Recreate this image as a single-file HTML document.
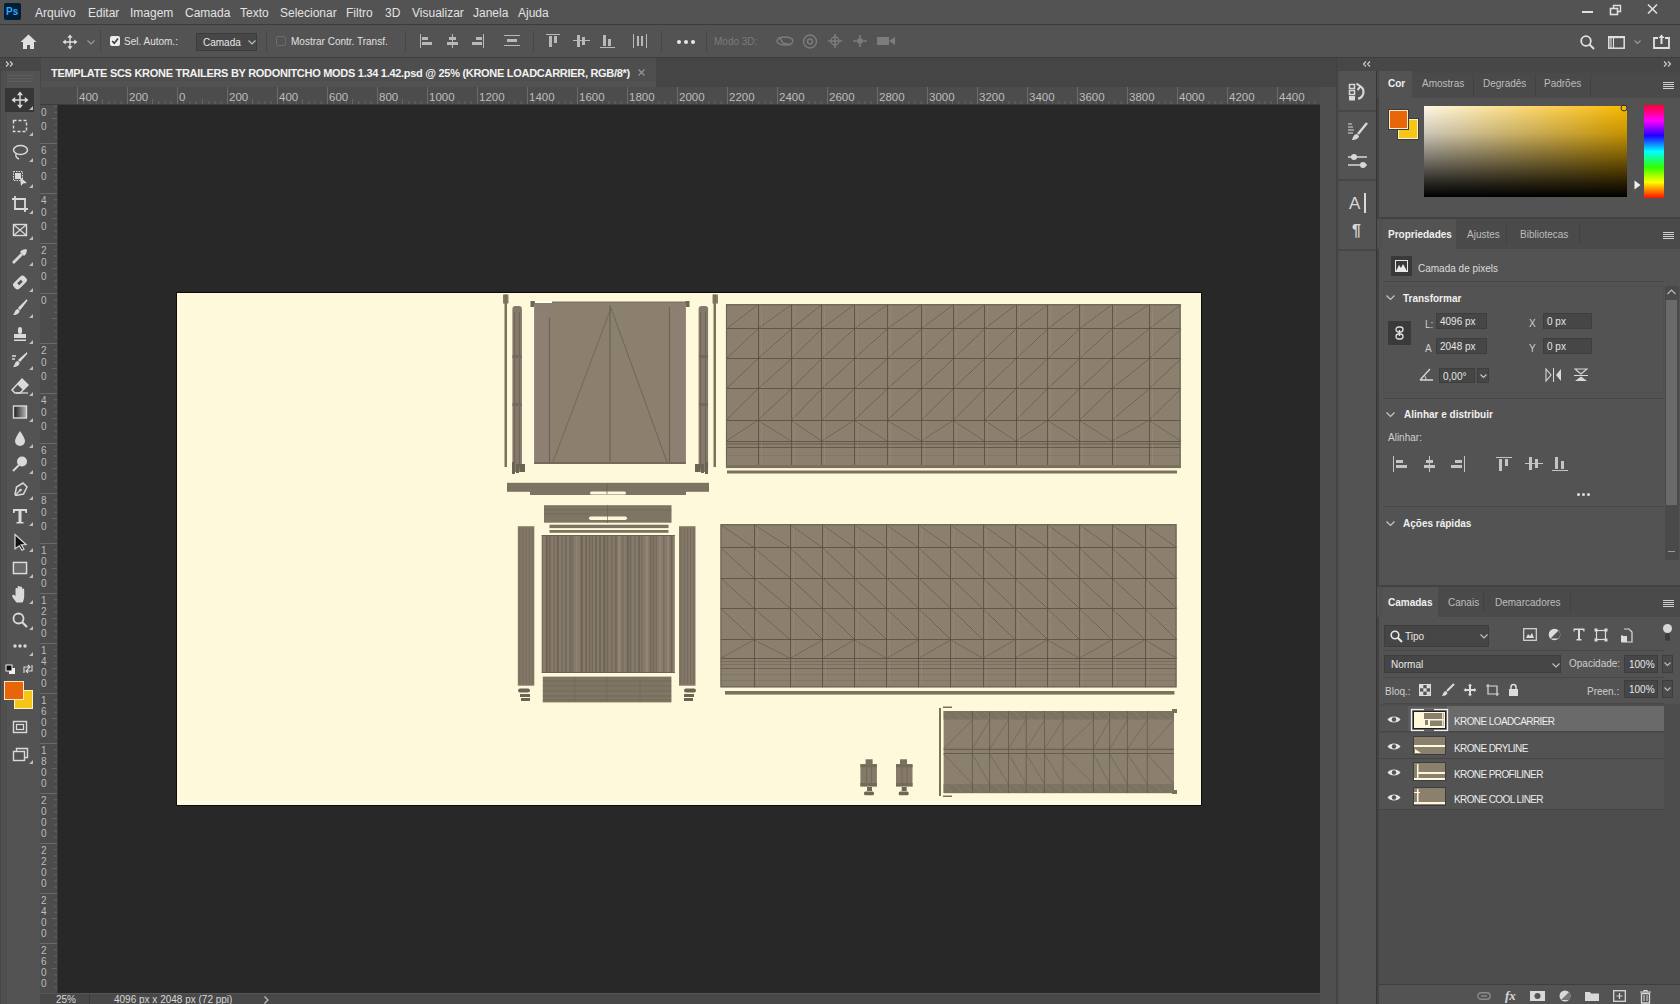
<!DOCTYPE html>
<html><head><meta charset="utf-8"><style>
*{margin:0;padding:0;box-sizing:border-box}
html,body{width:1680px;height:1004px;overflow:hidden;background:#535353;font-family:"Liberation Sans",sans-serif;color:#e8e8e8;position:relative}
.a{position:absolute}
.t{position:absolute;white-space:nowrap;line-height:1}
.mi{font-size:12px;top:7px;color:#e4e4e4}
svg{position:absolute;overflow:visible}
</style></head><body>
<div class="a" style="left:0px;top:0px;width:1680px;height:24px;background:#535353;"></div>
<div class="a" style="left:0px;top:24px;width:1680px;height:1px;background:#3b3b3b;"></div>
<div class="a" style="left:0px;top:25px;width:1680px;height:32px;background:#535353;"></div>
<div class="a" style="left:0px;top:57px;width:1680px;height:1px;background:#3d3d3d;"></div>
<div class="a" style="left:0px;top:58px;width:40px;height:946px;background:#535353;"></div>
<div class="a" style="left:0px;top:58px;width:40px;height:13px;background:#474747;"></div>
<div class="a" style="left:40px;top:58px;width:1296px;height:29px;background:#454545;"></div>
<div class="a" style="left:40px;top:58px;width:616px;height:29px;background:#4e4e4e;"></div>
<div class="a" style="left:40px;top:81px;width:616px;height:6px;background:#525252;"></div>
<div class="a" style="left:40px;top:58px;width:1px;height:29px;background:#474747;"></div>
<div class="a" style="left:40px;top:87px;width:1280px;height:18px;background:#4c4c4c;"></div>
<div class="a" style="left:40px;top:105px;width:18px;height:888px;background:#4c4c4c;"></div>
<div class="a" style="left:58px;top:105px;width:1262px;height:888px;background:#282828;"></div>
<div class="a" style="left:40px;top:993px;width:1280px;height:11px;background:#484848;"></div>
<div class="a" style="left:1320px;top:87px;width:16px;height:917px;background:#4f4f4f;"></div>
<div class="a" style="left:1336px;top:58px;width:344px;height:946px;background:#474747;"></div>
<div class="a" style="left:1337px;top:71px;width:39px;height:933px;background:#535353;"></div>
<div class="a" style="left:1378px;top:71px;width:302px;height:933px;background:#535353;"></div>
<div class="a" style="left:4px;top:3px;width:17px;height:17px;background:#001e36;border-radius:2px"></div>
<div class="t" style="left:6px;top:7px;font-size:10px;color:#31a8ff;font-weight:bold;">Ps</div>
<div class="t" style="left:35px;top:7px;font-size:12px;color:#e2e2e2;">Arquivo</div>
<div class="t" style="left:88px;top:7px;font-size:12px;color:#e2e2e2;">Editar</div>
<div class="t" style="left:130px;top:7px;font-size:12px;color:#e2e2e2;">Imagem</div>
<div class="t" style="left:185px;top:7px;font-size:12px;color:#e2e2e2;">Camada</div>
<div class="t" style="left:240px;top:7px;font-size:12px;color:#e2e2e2;">Texto</div>
<div class="t" style="left:280px;top:7px;font-size:12px;color:#e2e2e2;">Selecionar</div>
<div class="t" style="left:346px;top:7px;font-size:12px;color:#e2e2e2;">Filtro</div>
<div class="t" style="left:385px;top:7px;font-size:12px;color:#e2e2e2;">3D</div>
<div class="t" style="left:412px;top:7px;font-size:12px;color:#e2e2e2;">Visualizar</div>
<div class="t" style="left:473px;top:7px;font-size:12px;color:#e2e2e2;">Janela</div>
<div class="t" style="left:518px;top:7px;font-size:12px;color:#e2e2e2;">Ajuda</div>
<div class="a" style="left:1582px;top:11px;width:11px;height:2px;background:#e0e0e0;"></div>
<svg style="left:1609px;top:4px;" width="14" height="12" viewBox="0 0 14 12"><rect x="1.5" y="4.5" width="7" height="6" fill="none" stroke="#e0e0e0" stroke-width="1.6"/><path d="M4.5 4.5V1.5H11.5V7.5H8.5" fill="none" stroke="#e0e0e0" stroke-width="1.4"/></svg>
<svg style="left:1647px;top:4px;" width="12" height="10" viewBox="0 0 12 10"><path d="M1 0.5L10 9.5M10 0.5L1 9.5" stroke="#e0e0e0" stroke-width="1.6"/></svg>
<svg style="left:20px;top:34px;" width="17" height="16" viewBox="0 0 17 16"><path d="M8.5 0.5L0.5 8H3V15H7V11H10V15H14V8H16.5Z" fill="#e0e0e0"/></svg>
<svg style="left:62px;top:34px;" width="16" height="16" viewBox="0 0 16 16"><path d="M8 2.5V13.5M2.5 8H13.5" stroke="#e0e0e0" stroke-width="1.3"/><path d="M8 0.5L10.6 3.8H5.4Z M8 15.5L10.6 12.2H5.4Z M0.5 8L3.8 5.4V10.6Z M15.5 8L12.2 5.4V10.6Z" fill="#e0e0e0"/></svg>
<svg style="left:87px;top:40px;" width="8" height="5" viewBox="0 0 8 5"><path d="M0.5 0.5L4 4L7.5 0.5" fill="none" stroke="#9a9a9a" stroke-width="1.2"/></svg>
<div class="a" style="left:100px;top:30px;width:1px;height:22px;background:#474747;"></div>
<div class="a" style="left:110px;top:36px;width:10px;height:10px;background:#ececec;border-radius:2px"></div>
<svg style="left:111px;top:37px;" width="8" height="8" viewBox="0 0 8 8"><path d="M1.2 4L3.3 6.2L7 1.5" fill="none" stroke="#3a3a3a" stroke-width="1.6"/></svg>
<div class="t" style="left:124px;top:37px;font-size:10px;color:#e0e0e0;">Sel. Autom.:</div>
<div class="a" style="left:196px;top:33px;width:61px;height:18px;background:#474747;border:1px solid #3c3c3c"></div>
<div class="t" style="left:203px;top:38px;font-size:10px;color:#e6e6e6;">Camada</div>
<svg style="left:248px;top:40px;" width="8" height="5" viewBox="0 0 8 5"><path d="M0.5 0.5L4 4L7.5 0.5" fill="none" stroke="#bdbdbd" stroke-width="1.2"/></svg>
<div class="a" style="left:266px;top:30px;width:1px;height:22px;background:#474747;"></div>
<div class="a" style="left:276px;top:36px;width:10px;height:10px;background:transparent;border:1px solid #6c6c6c;border-radius:2px"></div>
<div class="t" style="left:291px;top:37px;font-size:10px;color:#e0e0e0;">Mostrar Contr. Transf.</div>
<div class="a" style="left:405px;top:30px;width:1px;height:22px;background:#474747;"></div>
<svg style="left:420px;top:34px;" width="13" height="14" viewBox="0 0 13 14"><rect x="0" y="0" width="1" height="14" fill="#b8b8b8"/><rect x="2" y="3" width="6" height="3" fill="#b8b8b8"/><rect x="2" y="8" width="10" height="3" fill="#b8b8b8"/></svg>
<svg style="left:446px;top:34px;" width="13" height="14" viewBox="0 0 13 14"><rect x="6" y="0" width="1" height="14" fill="#b8b8b8"/><rect x="3" y="3" width="7" height="3" fill="#b8b8b8"/><rect x="1" y="8" width="11" height="3" fill="#b8b8b8"/></svg>
<svg style="left:471px;top:34px;" width="13" height="14" viewBox="0 0 13 14"><rect x="12" y="0" width="1" height="14" fill="#b8b8b8"/><rect x="5" y="3" width="6" height="3" fill="#b8b8b8"/><rect x="1" y="8" width="10" height="3" fill="#b8b8b8"/></svg>
<svg style="left:504px;top:35px;" width="16" height="12" viewBox="0 0 16 12"><rect x="0" y="0" width="16" height="1" fill="#b8b8b8"/><rect x="3" y="4" width="10" height="3" fill="#b8b8b8"/><rect x="0" y="10" width="16" height="1" fill="#b8b8b8"/></svg>
<div class="a" style="left:533px;top:30px;width:1px;height:22px;background:#474747;"></div>
<svg style="left:546px;top:34px;" width="14" height="14" viewBox="0 0 14 14"><rect x="0" y="0" width="14" height="1" fill="#b8b8b8"/><rect x="3" y="2" width="3" height="11" fill="#b8b8b8"/><rect x="8" y="2" width="3" height="7" fill="#b8b8b8"/></svg>
<svg style="left:573px;top:34px;" width="17" height="14" viewBox="0 0 17 14"><rect x="0" y="6" width="17" height="1" fill="#b8b8b8"/><rect x="4" y="1" width="3" height="12" fill="#b8b8b8"/><rect x="9" y="3" width="3" height="8" fill="#b8b8b8"/></svg>
<svg style="left:600px;top:34px;" width="15" height="14" viewBox="0 0 15 14"><rect x="0" y="13" width="15" height="1" fill="#b8b8b8"/><rect x="3" y="1" width="3" height="11" fill="#b8b8b8"/><rect x="8" y="5" width="3" height="7" fill="#b8b8b8"/></svg>
<svg style="left:633px;top:34px;" width="14" height="14" viewBox="0 0 14 14"><rect x="0" y="0" width="1" height="14" fill="#b8b8b8"/><rect x="13" y="0" width="1" height="14" fill="#b8b8b8"/><rect x="4" y="2" width="2" height="10" fill="#b8b8b8"/><rect x="8" y="2" width="2" height="10" fill="#b8b8b8"/></svg>
<div class="a" style="left:661px;top:30px;width:1px;height:22px;background:#474747;"></div>
<div class="a" style="left:677px;top:40px;width:4px;height:4px;background:#e8e8e8;border-radius:2px"></div>
<div class="a" style="left:684px;top:40px;width:4px;height:4px;background:#e8e8e8;border-radius:2px"></div>
<div class="a" style="left:691px;top:40px;width:4px;height:4px;background:#e8e8e8;border-radius:2px"></div>
<div class="a" style="left:706px;top:30px;width:1px;height:22px;background:#474747;"></div>
<div class="t" style="left:714px;top:37px;font-size:10px;color:#7a7a7a;">Modo 3D:</div>
<svg style="left:775px;top:34px;" width="20" height="14" viewBox="0 0 20 14"><ellipse cx="10" cy="7" rx="8" ry="4" fill="none" stroke="#7c7c7c" stroke-width="1.4"/><path d="M4 3L8 9L16 11" fill="none" stroke="#7c7c7c" stroke-width="1.4"/></svg>
<svg style="left:802px;top:34px;" width="16" height="15" viewBox="0 0 16 15"><circle cx="8" cy="7.5" r="6.5" fill="none" stroke="#7c7c7c" stroke-width="1.4"/><circle cx="8" cy="7.5" r="2.5" fill="none" stroke="#7c7c7c" stroke-width="1.4"/></svg>
<svg style="left:827px;top:33px;" width="16" height="16" viewBox="0 0 16 16"><path d="M8 1V15M1 8H15" stroke="#7c7c7c" stroke-width="1.6"/><circle cx="8" cy="8" r="4" fill="none" stroke="#7c7c7c" stroke-width="1.4"/></svg>
<svg style="left:852px;top:34px;" width="16" height="14" viewBox="0 0 16 14"><path d="M8 1V13M1 7H15" stroke="#7c7c7c" stroke-width="1.6"/><rect x="5.5" y="4.5" width="5" height="5" fill="#7c7c7c"/></svg>
<svg style="left:876px;top:35px;" width="20" height="12" viewBox="0 0 20 12"><rect x="1" y="2" width="12" height="8" fill="#7c7c7c"/><path d="M13 6L19 2V10Z" fill="#7c7c7c"/></svg>
<svg style="left:1580px;top:35px;" width="15" height="15" viewBox="0 0 15 15"><circle cx="6" cy="6" r="4.8" fill="none" stroke="#e0e0e0" stroke-width="1.8"/><path d="M9.5 9.5L14 14" stroke="#e0e0e0" stroke-width="2"/></svg>
<svg style="left:1608px;top:36px;" width="17" height="13" viewBox="0 0 17 13"><rect x="0.8" y="0.8" width="15.4" height="11.4" fill="none" stroke="#e0e0e0" stroke-width="1.5"/><rect x="0" y="0" width="17" height="2.2" fill="#e0e0e0"/><path d="M3 2V12M5.5 2V12" stroke="#e0e0e0" stroke-width="1.1"/></svg>
<svg style="left:1634px;top:40px;" width="7" height="4" viewBox="0 0 7 4"><path d="M0.5 0.5L3.5 3.5L6.5 0.5" fill="none" stroke="#9a9a9a" stroke-width="1.2"/></svg>
<svg style="left:1653px;top:34px;" width="17" height="15" viewBox="0 0 17 15"><path d="M5 4H1V14H16V4H12" fill="none" stroke="#e0e0e0" stroke-width="1.8"/><path d="M8.5 0.5L5.5 4H7.5V10H9.5V4H11.5Z" fill="#e0e0e0"/></svg>
<div class="t" style="left:51px;top:68px;font-size:11px;color:#f2f2f2;font-weight:bold;letter-spacing:-0.29px">TEMPLATE SCS KRONE TRAILERS BY RODONITCHO MODS 1.34 1.42.psd @ 25% (KRONE LOADCARRIER, RGB/8*)</div>
<svg style="left:638px;top:69px;" width="7" height="7" viewBox="0 0 7 7"><path d="M0.5 0.5L6.5 6.5M6.5 0.5L0.5 6.5" stroke="#9a9a9a" stroke-width="1.1"/></svg>
<svg style="left:5px;top:61px;" width="10" height="6" viewBox="0 0 10 6"><path d="M1 0.5L3.5 3L1 5.5M5 0.5L7.5 3L5 5.5" fill="none" stroke="#d0d0d0" stroke-width="1.1"/></svg>
<svg style="left:1663px;top:61px;" width="10" height="6" viewBox="0 0 10 6"><path d="M1 0.5L3.5 3L1 5.5M5 0.5L7.5 3L5 5.5" fill="none" stroke="#d0d0d0" stroke-width="1.1"/></svg>
<svg style="left:1362px;top:61px;" width="10" height="6" viewBox="0 0 10 6"><path d="M4 0.5L1.5 3L4 5.5M8 0.5L5.5 3L8 5.5" fill="none" stroke="#d0d0d0" stroke-width="1.1"/></svg>
<div class="a" style="left:0px;top:71px;width:1px;height:933px;background:#454545;"></div>
<div class="a" style="left:1px;top:71px;width:6px;height:933px;background:#4f4f4f;"></div>
<div class="a" style="left:7px;top:75px;width:26px;height:1px;background:#5e5e5e;"></div>
<div class="a" style="left:7px;top:78px;width:26px;height:1px;background:#5e5e5e;"></div>
<div class="a" style="left:7px;top:81px;width:26px;height:1px;background:#5e5e5e;"></div>
<div class="a" style="left:5px;top:88px;width:29px;height:24px;background:#363636;"></div>
<svg style="left:11px;top:91px;" width="18" height="18" viewBox="0 0 18 18"><path d="M9 3V15M3 9H15" stroke="#dadada" stroke-width="1.4"/><path d="M9 0.5L12 4.2H6Z M9 17.5L12 13.8H6Z M0.5 9L4.2 6V12Z M17.5 9L13.8 6V12Z" fill="#dadada"/></svg>
<svg style="left:29px;top:106px;" width="4" height="4" viewBox="0 0 4 4"><path d="M4 0V4H0Z" fill="#bdbdbd"/></svg>
<svg style="left:11px;top:117px;" width="18" height="18" viewBox="0 0 18 18"><rect x="2.5" y="3.5" width="13" height="11" fill="none" stroke="#dadada" stroke-width="1.4" stroke-dasharray="3 2"/></svg>
<svg style="left:29px;top:132px;" width="4" height="4" viewBox="0 0 4 4"><path d="M4 0V4H0Z" fill="#bdbdbd"/></svg>
<svg style="left:11px;top:143px;" width="18" height="18" viewBox="0 0 18 18"><ellipse cx="9.5" cy="7" rx="7" ry="4.5" fill="none" stroke="#dadada" stroke-width="1.5"/><path d="M5 11C4 14 6 15 8 16" fill="none" stroke="#dadada" stroke-width="1.4"/></svg>
<svg style="left:29px;top:158px;" width="4" height="4" viewBox="0 0 4 4"><path d="M4 0V4H0Z" fill="#bdbdbd"/></svg>
<svg style="left:11px;top:169px;" width="18" height="18" viewBox="0 0 18 18"><rect x="2.5" y="2.5" width="9" height="9" fill="none" stroke="#dadada" stroke-width="1" stroke-dasharray="1.5 1"/><rect x="4" y="4" width="6" height="6" fill="#dadada"/><path d="M9 8L16 14L12 14.5L10 17Z" fill="#dadada"/></svg>
<svg style="left:29px;top:184px;" width="4" height="4" viewBox="0 0 4 4"><path d="M4 0V4H0Z" fill="#bdbdbd"/></svg>
<svg style="left:11px;top:195px;" width="18" height="18" viewBox="0 0 18 18"><path d="M4 1V14H17M1 4H14V17" fill="none" stroke="#dadada" stroke-width="1.8"/></svg>
<svg style="left:29px;top:210px;" width="4" height="4" viewBox="0 0 4 4"><path d="M4 0V4H0Z" fill="#bdbdbd"/></svg>
<svg style="left:11px;top:221px;" width="18" height="18" viewBox="0 0 18 18"><rect x="2.5" y="3.5" width="13" height="11" fill="none" stroke="#dadada" stroke-width="1.4"/><path d="M2.5 3.5L15.5 14.5M15.5 3.5L2.5 14.5" stroke="#dadada" stroke-width="1.2"/></svg>
<svg style="left:29px;top:236px;" width="4" height="4" viewBox="0 0 4 4"><path d="M4 0V4H0Z" fill="#bdbdbd"/></svg>
<svg style="left:11px;top:247px;" width="18" height="18" viewBox="0 0 18 18"><path d="M3 16L2 15L10 7L11 8Z" fill="none" stroke="#dadada" stroke-width="1.4"/><path d="M9 5L13 9L15 7L16 3L15 2L11 3Z" fill="#dadada"/></svg>
<svg style="left:29px;top:262px;" width="4" height="4" viewBox="0 0 4 4"><path d="M4 0V4H0Z" fill="#bdbdbd"/></svg>
<svg style="left:11px;top:273px;" width="18" height="18" viewBox="0 0 18 18"><rect x="5" y="2" width="8" height="15" rx="3" transform="rotate(45 9 9.5)" fill="#dadada"/><rect x="7.5" y="7" width="3" height="5" transform="rotate(45 9 9.5)" fill="#535353"/></svg>
<svg style="left:29px;top:288px;" width="4" height="4" viewBox="0 0 4 4"><path d="M4 0V4H0Z" fill="#bdbdbd"/></svg>
<svg style="left:11px;top:299px;" width="18" height="18" viewBox="0 0 18 18"><path d="M16 1L9 10L8 9Z" fill="#dadada" stroke="#dadada" stroke-width="1.6"/><path d="M7 10C4 10 4 14 2 16C6 16 9 14 8.5 11.5Z" fill="#dadada"/></svg>
<svg style="left:29px;top:314px;" width="4" height="4" viewBox="0 0 4 4"><path d="M4 0V4H0Z" fill="#bdbdbd"/></svg>
<svg style="left:11px;top:325px;" width="18" height="18" viewBox="0 0 18 18"><rect x="7" y="2" width="4" height="7" rx="2" fill="#dadada"/><rect x="3" y="9" width="12" height="4" fill="#dadada"/><rect x="3" y="14.5" width="12" height="1.5" fill="#dadada"/></svg>
<svg style="left:29px;top:340px;" width="4" height="4" viewBox="0 0 4 4"><path d="M4 0V4H0Z" fill="#bdbdbd"/></svg>
<svg style="left:11px;top:351px;" width="18" height="18" viewBox="0 0 18 18"><path d="M16 2L9 10L8 9Z" fill="#dadada" stroke="#dadada" stroke-width="1.5"/><path d="M7 10C4 10 4 14 2 16C6 16 9 14 8.5 11.5Z" fill="#dadada"/><path d="M1 5H5M1 8H4" stroke="#dadada" stroke-width="1.3"/></svg>
<svg style="left:29px;top:366px;" width="4" height="4" viewBox="0 0 4 4"><path d="M4 0V4H0Z" fill="#bdbdbd"/></svg>
<svg style="left:11px;top:377px;" width="18" height="18" viewBox="0 0 18 18"><path d="M11 2L17 8L9 16H4L1 13Z" fill="none" stroke="#dadada" stroke-width="1.5"/><path d="M11 2L17 8L12 13L6 7Z" fill="#dadada"/><path d="M5 16H17" stroke="#dadada" stroke-width="1.3"/></svg>
<svg style="left:29px;top:392px;" width="4" height="4" viewBox="0 0 4 4"><path d="M4 0V4H0Z" fill="#bdbdbd"/></svg>
<svg style="left:11px;top:403px;" width="18" height="18" viewBox="0 0 18 18"><defs><linearGradient id="gg" x1="0" x2="1" y1="0" y2="0"><stop offset="0" stop-color="#1a1a1a"/><stop offset="1" stop-color="#b8b8b8"/></linearGradient></defs><rect x="2.5" y="3" width="13" height="12" fill="url(#gg)" stroke="#dadada" stroke-width="1.4"/></svg>
<svg style="left:29px;top:418px;" width="4" height="4" viewBox="0 0 4 4"><path d="M4 0V4H0Z" fill="#bdbdbd"/></svg>
<svg style="left:11px;top:429px;" width="18" height="18" viewBox="0 0 18 18"><path d="M9 2C9 2 4 9 4 12A5 5 0 0 0 14 12C14 9 9 2 9 2Z" fill="#dadada"/></svg>
<svg style="left:29px;top:444px;" width="4" height="4" viewBox="0 0 4 4"><path d="M4 0V4H0Z" fill="#bdbdbd"/></svg>
<svg style="left:11px;top:455px;" width="18" height="18" viewBox="0 0 18 18"><circle cx="11" cy="6.5" r="5" fill="#dadada"/><path d="M8 10L2 16" stroke="#dadada" stroke-width="2"/></svg>
<svg style="left:29px;top:470px;" width="4" height="4" viewBox="0 0 4 4"><path d="M4 0V4H0Z" fill="#bdbdbd"/></svg>
<svg style="left:11px;top:481px;" width="18" height="18" viewBox="0 0 18 18"><path d="M12 2L16 6L12.5 13L5 14.5L4 13.5L5.5 6Z" fill="none" stroke="#dadada" stroke-width="1.5" transform="rotate(0 9 9)"/><path d="M4.5 14L9 9.5" stroke="#dadada" stroke-width="1.1"/><circle cx="9.5" cy="9" r="1.3" fill="#dadada"/></svg>
<svg style="left:29px;top:496px;" width="4" height="4" viewBox="0 0 4 4"><path d="M4 0V4H0Z" fill="#bdbdbd"/></svg>
<svg style="left:11px;top:507px;" width="18" height="18" viewBox="0 0 18 18"><path d="M2 2H16V6H14.5L14 4H10.5V15H12.5V16.5H5.5V15H7.5V4H4L3.5 6H2Z" fill="#dadada"/></svg>
<svg style="left:29px;top:522px;" width="4" height="4" viewBox="0 0 4 4"><path d="M4 0V4H0Z" fill="#bdbdbd"/></svg>
<svg style="left:11px;top:533px;" width="18" height="18" viewBox="0 0 18 18"><path d="M4 1.5L15 11.5L10.2 11.8L13 16.2L11 17.3L8.3 12.8L4 15.8Z" fill="#111" stroke="#dadada" stroke-width="1.2"/></svg>
<svg style="left:29px;top:548px;" width="4" height="4" viewBox="0 0 4 4"><path d="M4 0V4H0Z" fill="#bdbdbd"/></svg>
<svg style="left:11px;top:559px;" width="18" height="18" viewBox="0 0 18 18"><rect x="2.5" y="3.5" width="13" height="11" fill="none" stroke="#dadada" stroke-width="1.6"/><rect x="4" y="5" width="10" height="8" fill="#6a6a6a"/></svg>
<svg style="left:29px;top:574px;" width="4" height="4" viewBox="0 0 4 4"><path d="M4 0V4H0Z" fill="#bdbdbd"/></svg>
<svg style="left:11px;top:585px;" width="18" height="18" viewBox="0 0 18 18"><path d="M5.5 17.5C3.5 15 1 12 1.2 10.5C1.6 9.3 3 9.6 4.5 11.2V4.2C4.5 2.6 6.6 2.6 6.6 4.2V8.5V2.2C6.6 0.6 8.8 0.6 8.8 2.2V8.5V2.8C8.8 1.2 11 1.2 11 2.8V8.8V4.6C11 3 13.2 3 13.2 4.6V11C13.2 14 12.4 16 11.5 17.5Z" fill="#dadada"/></svg>
<svg style="left:29px;top:600px;" width="4" height="4" viewBox="0 0 4 4"><path d="M4 0V4H0Z" fill="#bdbdbd"/></svg>
<svg style="left:11px;top:611px;" width="18" height="18" viewBox="0 0 18 18"><circle cx="7.5" cy="7.5" r="5" fill="none" stroke="#dadada" stroke-width="1.8"/><path d="M11 11L16 16" stroke="#dadada" stroke-width="2.2"/></svg>
<svg style="left:29px;top:626px;" width="4" height="4" viewBox="0 0 4 4"><path d="M4 0V4H0Z" fill="#bdbdbd"/></svg>
<svg style="left:11px;top:637px;" width="18" height="18" viewBox="0 0 18 18"><circle cx="4" cy="9" r="1.7" fill="#dadada"/><circle cx="9" cy="9" r="1.7" fill="#dadada"/><circle cx="14" cy="9" r="1.7" fill="#dadada"/></svg>
<svg style="left:29px;top:652px;" width="4" height="4" viewBox="0 0 4 4"><path d="M4 0V4H0Z" fill="#bdbdbd"/></svg>
<svg style="left:5px;top:664px;" width="11" height="11" viewBox="0 0 11 11"><rect x="4" y="4" width="6" height="6" fill="#f0f0f0"/><rect x="1" y="1" width="6" height="6" fill="#111" stroke="#f0f0f0" stroke-width="1"/></svg>
<svg style="left:22px;top:664px;" width="12" height="10" viewBox="0 0 12 10"><path d="M2 9V3H8M6 1L8 3L6 5M10 1V7H4M6 9L4 7L6 5" fill="none" stroke="#dadada" stroke-width="1.1"/></svg>
<div class="a" style="left:14px;top:690px;width:19px;height:19px;background:#f5c518;border:1px solid #fff2c0"></div>
<div class="a" style="left:4px;top:681px;width:20px;height:19px;background:#e8650a;border:1px solid #ffe4c0"></div>
<svg style="left:11px;top:718px;" width="18" height="18" viewBox="0 0 18 18"><rect x="2.5" y="3.5" width="13" height="11" fill="none" stroke="#dadada" stroke-width="1.4"/><rect x="5.5" y="6.5" width="7" height="5" fill="none" stroke="#dadada" stroke-width="1.2"/></svg>
<svg style="left:11px;top:745px;" width="18" height="18" viewBox="0 0 18 18"><rect x="2.5" y="6.5" width="11" height="9" fill="none" stroke="#dadada" stroke-width="1.4"/><path d="M5.5 6.5V3.5H16.5V12.5H13.5" fill="none" stroke="#dadada" stroke-width="1.4"/></svg>
<svg style="left:29px;top:760px;" width="4" height="4" viewBox="0 0 4 4"><path d="M4 0V4H0Z" fill="#bdbdbd"/></svg>
<svg style="left:40px;top:87px;" width="1280" height="18" viewBox="0 0 1280 18"><rect x="37" y="0" width="1" height="18" fill="#6a6a6a"/><rect x="43.25" y="14" width="1" height="3" fill="#656565"/><rect x="49.50" y="14" width="1" height="3" fill="#656565"/><rect x="55.75" y="14" width="1" height="3" fill="#656565"/><rect x="62.00" y="12" width="1" height="5" fill="#656565"/><rect x="68.25" y="14" width="1" height="3" fill="#656565"/><rect x="74.50" y="14" width="1" height="3" fill="#656565"/><rect x="80.75" y="14" width="1" height="3" fill="#656565"/><rect x="87" y="0" width="1" height="18" fill="#6a6a6a"/><rect x="93.25" y="14" width="1" height="3" fill="#656565"/><rect x="99.50" y="14" width="1" height="3" fill="#656565"/><rect x="105.75" y="14" width="1" height="3" fill="#656565"/><rect x="112.00" y="12" width="1" height="5" fill="#656565"/><rect x="118.25" y="14" width="1" height="3" fill="#656565"/><rect x="124.50" y="14" width="1" height="3" fill="#656565"/><rect x="130.75" y="14" width="1" height="3" fill="#656565"/><rect x="137" y="0" width="1" height="18" fill="#6a6a6a"/><rect x="143.25" y="14" width="1" height="3" fill="#656565"/><rect x="149.50" y="14" width="1" height="3" fill="#656565"/><rect x="155.75" y="14" width="1" height="3" fill="#656565"/><rect x="162.00" y="12" width="1" height="5" fill="#656565"/><rect x="168.25" y="14" width="1" height="3" fill="#656565"/><rect x="174.50" y="14" width="1" height="3" fill="#656565"/><rect x="180.75" y="14" width="1" height="3" fill="#656565"/><rect x="187" y="0" width="1" height="18" fill="#6a6a6a"/><rect x="193.25" y="14" width="1" height="3" fill="#656565"/><rect x="199.50" y="14" width="1" height="3" fill="#656565"/><rect x="205.75" y="14" width="1" height="3" fill="#656565"/><rect x="212.00" y="12" width="1" height="5" fill="#656565"/><rect x="218.25" y="14" width="1" height="3" fill="#656565"/><rect x="224.50" y="14" width="1" height="3" fill="#656565"/><rect x="230.75" y="14" width="1" height="3" fill="#656565"/><rect x="237" y="0" width="1" height="18" fill="#6a6a6a"/><rect x="243.25" y="14" width="1" height="3" fill="#656565"/><rect x="249.50" y="14" width="1" height="3" fill="#656565"/><rect x="255.75" y="14" width="1" height="3" fill="#656565"/><rect x="262.00" y="12" width="1" height="5" fill="#656565"/><rect x="268.25" y="14" width="1" height="3" fill="#656565"/><rect x="274.50" y="14" width="1" height="3" fill="#656565"/><rect x="280.75" y="14" width="1" height="3" fill="#656565"/><rect x="287" y="0" width="1" height="18" fill="#6a6a6a"/><rect x="293.25" y="14" width="1" height="3" fill="#656565"/><rect x="299.50" y="14" width="1" height="3" fill="#656565"/><rect x="305.75" y="14" width="1" height="3" fill="#656565"/><rect x="312.00" y="12" width="1" height="5" fill="#656565"/><rect x="318.25" y="14" width="1" height="3" fill="#656565"/><rect x="324.50" y="14" width="1" height="3" fill="#656565"/><rect x="330.75" y="14" width="1" height="3" fill="#656565"/><rect x="337" y="0" width="1" height="18" fill="#6a6a6a"/><rect x="343.25" y="14" width="1" height="3" fill="#656565"/><rect x="349.50" y="14" width="1" height="3" fill="#656565"/><rect x="355.75" y="14" width="1" height="3" fill="#656565"/><rect x="362.00" y="12" width="1" height="5" fill="#656565"/><rect x="368.25" y="14" width="1" height="3" fill="#656565"/><rect x="374.50" y="14" width="1" height="3" fill="#656565"/><rect x="380.75" y="14" width="1" height="3" fill="#656565"/><rect x="387" y="0" width="1" height="18" fill="#6a6a6a"/><rect x="393.25" y="14" width="1" height="3" fill="#656565"/><rect x="399.50" y="14" width="1" height="3" fill="#656565"/><rect x="405.75" y="14" width="1" height="3" fill="#656565"/><rect x="412.00" y="12" width="1" height="5" fill="#656565"/><rect x="418.25" y="14" width="1" height="3" fill="#656565"/><rect x="424.50" y="14" width="1" height="3" fill="#656565"/><rect x="430.75" y="14" width="1" height="3" fill="#656565"/><rect x="437" y="0" width="1" height="18" fill="#6a6a6a"/><rect x="443.25" y="14" width="1" height="3" fill="#656565"/><rect x="449.50" y="14" width="1" height="3" fill="#656565"/><rect x="455.75" y="14" width="1" height="3" fill="#656565"/><rect x="462.00" y="12" width="1" height="5" fill="#656565"/><rect x="468.25" y="14" width="1" height="3" fill="#656565"/><rect x="474.50" y="14" width="1" height="3" fill="#656565"/><rect x="480.75" y="14" width="1" height="3" fill="#656565"/><rect x="487" y="0" width="1" height="18" fill="#6a6a6a"/><rect x="493.25" y="14" width="1" height="3" fill="#656565"/><rect x="499.50" y="14" width="1" height="3" fill="#656565"/><rect x="505.75" y="14" width="1" height="3" fill="#656565"/><rect x="512.00" y="12" width="1" height="5" fill="#656565"/><rect x="518.25" y="14" width="1" height="3" fill="#656565"/><rect x="524.50" y="14" width="1" height="3" fill="#656565"/><rect x="530.75" y="14" width="1" height="3" fill="#656565"/><rect x="537" y="0" width="1" height="18" fill="#6a6a6a"/><rect x="543.25" y="14" width="1" height="3" fill="#656565"/><rect x="549.50" y="14" width="1" height="3" fill="#656565"/><rect x="555.75" y="14" width="1" height="3" fill="#656565"/><rect x="562.00" y="12" width="1" height="5" fill="#656565"/><rect x="568.25" y="14" width="1" height="3" fill="#656565"/><rect x="574.50" y="14" width="1" height="3" fill="#656565"/><rect x="580.75" y="14" width="1" height="3" fill="#656565"/><rect x="587" y="0" width="1" height="18" fill="#6a6a6a"/><rect x="593.25" y="14" width="1" height="3" fill="#656565"/><rect x="599.50" y="14" width="1" height="3" fill="#656565"/><rect x="605.75" y="14" width="1" height="3" fill="#656565"/><rect x="612.00" y="12" width="1" height="5" fill="#656565"/><rect x="618.25" y="14" width="1" height="3" fill="#656565"/><rect x="624.50" y="14" width="1" height="3" fill="#656565"/><rect x="630.75" y="14" width="1" height="3" fill="#656565"/><rect x="637" y="0" width="1" height="18" fill="#6a6a6a"/><rect x="643.25" y="14" width="1" height="3" fill="#656565"/><rect x="649.50" y="14" width="1" height="3" fill="#656565"/><rect x="655.75" y="14" width="1" height="3" fill="#656565"/><rect x="662.00" y="12" width="1" height="5" fill="#656565"/><rect x="668.25" y="14" width="1" height="3" fill="#656565"/><rect x="674.50" y="14" width="1" height="3" fill="#656565"/><rect x="680.75" y="14" width="1" height="3" fill="#656565"/><rect x="687" y="0" width="1" height="18" fill="#6a6a6a"/><rect x="693.25" y="14" width="1" height="3" fill="#656565"/><rect x="699.50" y="14" width="1" height="3" fill="#656565"/><rect x="705.75" y="14" width="1" height="3" fill="#656565"/><rect x="712.00" y="12" width="1" height="5" fill="#656565"/><rect x="718.25" y="14" width="1" height="3" fill="#656565"/><rect x="724.50" y="14" width="1" height="3" fill="#656565"/><rect x="730.75" y="14" width="1" height="3" fill="#656565"/><rect x="737" y="0" width="1" height="18" fill="#6a6a6a"/><rect x="743.25" y="14" width="1" height="3" fill="#656565"/><rect x="749.50" y="14" width="1" height="3" fill="#656565"/><rect x="755.75" y="14" width="1" height="3" fill="#656565"/><rect x="762.00" y="12" width="1" height="5" fill="#656565"/><rect x="768.25" y="14" width="1" height="3" fill="#656565"/><rect x="774.50" y="14" width="1" height="3" fill="#656565"/><rect x="780.75" y="14" width="1" height="3" fill="#656565"/><rect x="787" y="0" width="1" height="18" fill="#6a6a6a"/><rect x="793.25" y="14" width="1" height="3" fill="#656565"/><rect x="799.50" y="14" width="1" height="3" fill="#656565"/><rect x="805.75" y="14" width="1" height="3" fill="#656565"/><rect x="812.00" y="12" width="1" height="5" fill="#656565"/><rect x="818.25" y="14" width="1" height="3" fill="#656565"/><rect x="824.50" y="14" width="1" height="3" fill="#656565"/><rect x="830.75" y="14" width="1" height="3" fill="#656565"/><rect x="837" y="0" width="1" height="18" fill="#6a6a6a"/><rect x="843.25" y="14" width="1" height="3" fill="#656565"/><rect x="849.50" y="14" width="1" height="3" fill="#656565"/><rect x="855.75" y="14" width="1" height="3" fill="#656565"/><rect x="862.00" y="12" width="1" height="5" fill="#656565"/><rect x="868.25" y="14" width="1" height="3" fill="#656565"/><rect x="874.50" y="14" width="1" height="3" fill="#656565"/><rect x="880.75" y="14" width="1" height="3" fill="#656565"/><rect x="887" y="0" width="1" height="18" fill="#6a6a6a"/><rect x="893.25" y="14" width="1" height="3" fill="#656565"/><rect x="899.50" y="14" width="1" height="3" fill="#656565"/><rect x="905.75" y="14" width="1" height="3" fill="#656565"/><rect x="912.00" y="12" width="1" height="5" fill="#656565"/><rect x="918.25" y="14" width="1" height="3" fill="#656565"/><rect x="924.50" y="14" width="1" height="3" fill="#656565"/><rect x="930.75" y="14" width="1" height="3" fill="#656565"/><rect x="937" y="0" width="1" height="18" fill="#6a6a6a"/><rect x="943.25" y="14" width="1" height="3" fill="#656565"/><rect x="949.50" y="14" width="1" height="3" fill="#656565"/><rect x="955.75" y="14" width="1" height="3" fill="#656565"/><rect x="962.00" y="12" width="1" height="5" fill="#656565"/><rect x="968.25" y="14" width="1" height="3" fill="#656565"/><rect x="974.50" y="14" width="1" height="3" fill="#656565"/><rect x="980.75" y="14" width="1" height="3" fill="#656565"/><rect x="987" y="0" width="1" height="18" fill="#6a6a6a"/><rect x="993.25" y="14" width="1" height="3" fill="#656565"/><rect x="999.50" y="14" width="1" height="3" fill="#656565"/><rect x="1005.75" y="14" width="1" height="3" fill="#656565"/><rect x="1012.00" y="12" width="1" height="5" fill="#656565"/><rect x="1018.25" y="14" width="1" height="3" fill="#656565"/><rect x="1024.50" y="14" width="1" height="3" fill="#656565"/><rect x="1030.75" y="14" width="1" height="3" fill="#656565"/><rect x="1037" y="0" width="1" height="18" fill="#6a6a6a"/><rect x="1043.25" y="14" width="1" height="3" fill="#656565"/><rect x="1049.50" y="14" width="1" height="3" fill="#656565"/><rect x="1055.75" y="14" width="1" height="3" fill="#656565"/><rect x="1062.00" y="12" width="1" height="5" fill="#656565"/><rect x="1068.25" y="14" width="1" height="3" fill="#656565"/><rect x="1074.50" y="14" width="1" height="3" fill="#656565"/><rect x="1080.75" y="14" width="1" height="3" fill="#656565"/><rect x="1087" y="0" width="1" height="18" fill="#6a6a6a"/><rect x="1093.25" y="14" width="1" height="3" fill="#656565"/><rect x="1099.50" y="14" width="1" height="3" fill="#656565"/><rect x="1105.75" y="14" width="1" height="3" fill="#656565"/><rect x="1112.00" y="12" width="1" height="5" fill="#656565"/><rect x="1118.25" y="14" width="1" height="3" fill="#656565"/><rect x="1124.50" y="14" width="1" height="3" fill="#656565"/><rect x="1130.75" y="14" width="1" height="3" fill="#656565"/><rect x="1137" y="0" width="1" height="18" fill="#6a6a6a"/><rect x="1143.25" y="14" width="1" height="3" fill="#656565"/><rect x="1149.50" y="14" width="1" height="3" fill="#656565"/><rect x="1155.75" y="14" width="1" height="3" fill="#656565"/><rect x="1162.00" y="12" width="1" height="5" fill="#656565"/><rect x="1168.25" y="14" width="1" height="3" fill="#656565"/><rect x="1174.50" y="14" width="1" height="3" fill="#656565"/><rect x="1180.75" y="14" width="1" height="3" fill="#656565"/><rect x="1187" y="0" width="1" height="18" fill="#6a6a6a"/><rect x="1193.25" y="14" width="1" height="3" fill="#656565"/><rect x="1199.50" y="14" width="1" height="3" fill="#656565"/><rect x="1205.75" y="14" width="1" height="3" fill="#656565"/><rect x="1212.00" y="12" width="1" height="5" fill="#656565"/><rect x="1218.25" y="14" width="1" height="3" fill="#656565"/><rect x="1224.50" y="14" width="1" height="3" fill="#656565"/><rect x="1230.75" y="14" width="1" height="3" fill="#656565"/><rect x="1237" y="0" width="1" height="18" fill="#6a6a6a"/><rect x="1243.25" y="14" width="1" height="3" fill="#656565"/><rect x="1249.50" y="14" width="1" height="3" fill="#656565"/><rect x="1255.75" y="14" width="1" height="3" fill="#656565"/><rect x="1262.00" y="12" width="1" height="5" fill="#656565"/><rect x="1268.25" y="14" width="1" height="3" fill="#656565"/><rect x="1274.50" y="14" width="1" height="3" fill="#656565"/></svg>
<div class="t" style="left:79px;top:92px;font-size:11.5px;color:#bdbdbd;">400</div>
<div class="t" style="left:129px;top:92px;font-size:11.5px;color:#bdbdbd;">200</div>
<div class="t" style="left:179px;top:92px;font-size:11.5px;color:#bdbdbd;">0</div>
<div class="t" style="left:229px;top:92px;font-size:11.5px;color:#bdbdbd;">200</div>
<div class="t" style="left:279px;top:92px;font-size:11.5px;color:#bdbdbd;">400</div>
<div class="t" style="left:329px;top:92px;font-size:11.5px;color:#bdbdbd;">600</div>
<div class="t" style="left:379px;top:92px;font-size:11.5px;color:#bdbdbd;">800</div>
<div class="t" style="left:429px;top:92px;font-size:11.5px;color:#bdbdbd;">1000</div>
<div class="t" style="left:479px;top:92px;font-size:11.5px;color:#bdbdbd;">1200</div>
<div class="t" style="left:529px;top:92px;font-size:11.5px;color:#bdbdbd;">1400</div>
<div class="t" style="left:579px;top:92px;font-size:11.5px;color:#bdbdbd;">1600</div>
<div class="t" style="left:629px;top:92px;font-size:11.5px;color:#bdbdbd;">1800</div>
<div class="t" style="left:679px;top:92px;font-size:11.5px;color:#bdbdbd;">2000</div>
<div class="t" style="left:729px;top:92px;font-size:11.5px;color:#bdbdbd;">2200</div>
<div class="t" style="left:779px;top:92px;font-size:11.5px;color:#bdbdbd;">2400</div>
<div class="t" style="left:829px;top:92px;font-size:11.5px;color:#bdbdbd;">2600</div>
<div class="t" style="left:879px;top:92px;font-size:11.5px;color:#bdbdbd;">2800</div>
<div class="t" style="left:929px;top:92px;font-size:11.5px;color:#bdbdbd;">3000</div>
<div class="t" style="left:979px;top:92px;font-size:11.5px;color:#bdbdbd;">3200</div>
<div class="t" style="left:1029px;top:92px;font-size:11.5px;color:#bdbdbd;">3400</div>
<div class="t" style="left:1079px;top:92px;font-size:11.5px;color:#bdbdbd;">3600</div>
<div class="t" style="left:1129px;top:92px;font-size:11.5px;color:#bdbdbd;">3800</div>
<div class="t" style="left:1179px;top:92px;font-size:11.5px;color:#bdbdbd;">4000</div>
<div class="t" style="left:1229px;top:92px;font-size:11.5px;color:#bdbdbd;">4200</div>
<div class="t" style="left:1279px;top:92px;font-size:11.5px;color:#bdbdbd;">4400</div>
<div class="a" style="left:40px;top:104px;width:1280px;height:1px;background:#3a3a3a;"></div>
<svg style="left:40px;top:105px;" width="18" height="888" viewBox="0 0 18 888"><rect x="14" y="0.50" width="3" height="1" fill="#656565"/><rect x="14" y="6.75" width="3" height="1" fill="#656565"/><rect x="12" y="13.00" width="5" height="1" fill="#656565"/><rect x="14" y="19.25" width="3" height="1" fill="#656565"/><rect x="14" y="25.50" width="3" height="1" fill="#656565"/><rect x="14" y="31.75" width="3" height="1" fill="#656565"/><rect x="0" y="38" width="18" height="1" fill="#6a6a6a"/><rect x="14" y="44.25" width="3" height="1" fill="#656565"/><rect x="14" y="50.50" width="3" height="1" fill="#656565"/><rect x="14" y="56.75" width="3" height="1" fill="#656565"/><rect x="12" y="63.00" width="5" height="1" fill="#656565"/><rect x="14" y="69.25" width="3" height="1" fill="#656565"/><rect x="14" y="75.50" width="3" height="1" fill="#656565"/><rect x="14" y="81.75" width="3" height="1" fill="#656565"/><rect x="0" y="88" width="18" height="1" fill="#6a6a6a"/><rect x="14" y="94.25" width="3" height="1" fill="#656565"/><rect x="14" y="100.50" width="3" height="1" fill="#656565"/><rect x="14" y="106.75" width="3" height="1" fill="#656565"/><rect x="12" y="113.00" width="5" height="1" fill="#656565"/><rect x="14" y="119.25" width="3" height="1" fill="#656565"/><rect x="14" y="125.50" width="3" height="1" fill="#656565"/><rect x="14" y="131.75" width="3" height="1" fill="#656565"/><rect x="0" y="138" width="18" height="1" fill="#6a6a6a"/><rect x="14" y="144.25" width="3" height="1" fill="#656565"/><rect x="14" y="150.50" width="3" height="1" fill="#656565"/><rect x="14" y="156.75" width="3" height="1" fill="#656565"/><rect x="12" y="163.00" width="5" height="1" fill="#656565"/><rect x="14" y="169.25" width="3" height="1" fill="#656565"/><rect x="14" y="175.50" width="3" height="1" fill="#656565"/><rect x="14" y="181.75" width="3" height="1" fill="#656565"/><rect x="0" y="188" width="18" height="1" fill="#6a6a6a"/><rect x="14" y="194.25" width="3" height="1" fill="#656565"/><rect x="14" y="200.50" width="3" height="1" fill="#656565"/><rect x="14" y="206.75" width="3" height="1" fill="#656565"/><rect x="12" y="213.00" width="5" height="1" fill="#656565"/><rect x="14" y="219.25" width="3" height="1" fill="#656565"/><rect x="14" y="225.50" width="3" height="1" fill="#656565"/><rect x="14" y="231.75" width="3" height="1" fill="#656565"/><rect x="0" y="238" width="18" height="1" fill="#6a6a6a"/><rect x="14" y="244.25" width="3" height="1" fill="#656565"/><rect x="14" y="250.50" width="3" height="1" fill="#656565"/><rect x="14" y="256.75" width="3" height="1" fill="#656565"/><rect x="12" y="263.00" width="5" height="1" fill="#656565"/><rect x="14" y="269.25" width="3" height="1" fill="#656565"/><rect x="14" y="275.50" width="3" height="1" fill="#656565"/><rect x="14" y="281.75" width="3" height="1" fill="#656565"/><rect x="0" y="288" width="18" height="1" fill="#6a6a6a"/><rect x="14" y="294.25" width="3" height="1" fill="#656565"/><rect x="14" y="300.50" width="3" height="1" fill="#656565"/><rect x="14" y="306.75" width="3" height="1" fill="#656565"/><rect x="12" y="313.00" width="5" height="1" fill="#656565"/><rect x="14" y="319.25" width="3" height="1" fill="#656565"/><rect x="14" y="325.50" width="3" height="1" fill="#656565"/><rect x="14" y="331.75" width="3" height="1" fill="#656565"/><rect x="0" y="338" width="18" height="1" fill="#6a6a6a"/><rect x="14" y="344.25" width="3" height="1" fill="#656565"/><rect x="14" y="350.50" width="3" height="1" fill="#656565"/><rect x="14" y="356.75" width="3" height="1" fill="#656565"/><rect x="12" y="363.00" width="5" height="1" fill="#656565"/><rect x="14" y="369.25" width="3" height="1" fill="#656565"/><rect x="14" y="375.50" width="3" height="1" fill="#656565"/><rect x="14" y="381.75" width="3" height="1" fill="#656565"/><rect x="0" y="388" width="18" height="1" fill="#6a6a6a"/><rect x="14" y="394.25" width="3" height="1" fill="#656565"/><rect x="14" y="400.50" width="3" height="1" fill="#656565"/><rect x="14" y="406.75" width="3" height="1" fill="#656565"/><rect x="12" y="413.00" width="5" height="1" fill="#656565"/><rect x="14" y="419.25" width="3" height="1" fill="#656565"/><rect x="14" y="425.50" width="3" height="1" fill="#656565"/><rect x="14" y="431.75" width="3" height="1" fill="#656565"/><rect x="0" y="438" width="18" height="1" fill="#6a6a6a"/><rect x="14" y="444.25" width="3" height="1" fill="#656565"/><rect x="14" y="450.50" width="3" height="1" fill="#656565"/><rect x="14" y="456.75" width="3" height="1" fill="#656565"/><rect x="12" y="463.00" width="5" height="1" fill="#656565"/><rect x="14" y="469.25" width="3" height="1" fill="#656565"/><rect x="14" y="475.50" width="3" height="1" fill="#656565"/><rect x="14" y="481.75" width="3" height="1" fill="#656565"/><rect x="0" y="488" width="18" height="1" fill="#6a6a6a"/><rect x="14" y="494.25" width="3" height="1" fill="#656565"/><rect x="14" y="500.50" width="3" height="1" fill="#656565"/><rect x="14" y="506.75" width="3" height="1" fill="#656565"/><rect x="12" y="513.00" width="5" height="1" fill="#656565"/><rect x="14" y="519.25" width="3" height="1" fill="#656565"/><rect x="14" y="525.50" width="3" height="1" fill="#656565"/><rect x="14" y="531.75" width="3" height="1" fill="#656565"/><rect x="0" y="538" width="18" height="1" fill="#6a6a6a"/><rect x="14" y="544.25" width="3" height="1" fill="#656565"/><rect x="14" y="550.50" width="3" height="1" fill="#656565"/><rect x="14" y="556.75" width="3" height="1" fill="#656565"/><rect x="12" y="563.00" width="5" height="1" fill="#656565"/><rect x="14" y="569.25" width="3" height="1" fill="#656565"/><rect x="14" y="575.50" width="3" height="1" fill="#656565"/><rect x="14" y="581.75" width="3" height="1" fill="#656565"/><rect x="0" y="588" width="18" height="1" fill="#6a6a6a"/><rect x="14" y="594.25" width="3" height="1" fill="#656565"/><rect x="14" y="600.50" width="3" height="1" fill="#656565"/><rect x="14" y="606.75" width="3" height="1" fill="#656565"/><rect x="12" y="613.00" width="5" height="1" fill="#656565"/><rect x="14" y="619.25" width="3" height="1" fill="#656565"/><rect x="14" y="625.50" width="3" height="1" fill="#656565"/><rect x="14" y="631.75" width="3" height="1" fill="#656565"/><rect x="0" y="638" width="18" height="1" fill="#6a6a6a"/><rect x="14" y="644.25" width="3" height="1" fill="#656565"/><rect x="14" y="650.50" width="3" height="1" fill="#656565"/><rect x="14" y="656.75" width="3" height="1" fill="#656565"/><rect x="12" y="663.00" width="5" height="1" fill="#656565"/><rect x="14" y="669.25" width="3" height="1" fill="#656565"/><rect x="14" y="675.50" width="3" height="1" fill="#656565"/><rect x="14" y="681.75" width="3" height="1" fill="#656565"/><rect x="0" y="688" width="18" height="1" fill="#6a6a6a"/><rect x="14" y="694.25" width="3" height="1" fill="#656565"/><rect x="14" y="700.50" width="3" height="1" fill="#656565"/><rect x="14" y="706.75" width="3" height="1" fill="#656565"/><rect x="12" y="713.00" width="5" height="1" fill="#656565"/><rect x="14" y="719.25" width="3" height="1" fill="#656565"/><rect x="14" y="725.50" width="3" height="1" fill="#656565"/><rect x="14" y="731.75" width="3" height="1" fill="#656565"/><rect x="0" y="738" width="18" height="1" fill="#6a6a6a"/><rect x="14" y="744.25" width="3" height="1" fill="#656565"/><rect x="14" y="750.50" width="3" height="1" fill="#656565"/><rect x="14" y="756.75" width="3" height="1" fill="#656565"/><rect x="12" y="763.00" width="5" height="1" fill="#656565"/><rect x="14" y="769.25" width="3" height="1" fill="#656565"/><rect x="14" y="775.50" width="3" height="1" fill="#656565"/><rect x="14" y="781.75" width="3" height="1" fill="#656565"/><rect x="0" y="788" width="18" height="1" fill="#6a6a6a"/><rect x="14" y="794.25" width="3" height="1" fill="#656565"/><rect x="14" y="800.50" width="3" height="1" fill="#656565"/><rect x="14" y="806.75" width="3" height="1" fill="#656565"/><rect x="12" y="813.00" width="5" height="1" fill="#656565"/><rect x="14" y="819.25" width="3" height="1" fill="#656565"/><rect x="14" y="825.50" width="3" height="1" fill="#656565"/><rect x="14" y="831.75" width="3" height="1" fill="#656565"/><rect x="0" y="838" width="18" height="1" fill="#6a6a6a"/><rect x="14" y="844.25" width="3" height="1" fill="#656565"/><rect x="14" y="850.50" width="3" height="1" fill="#656565"/><rect x="14" y="856.75" width="3" height="1" fill="#656565"/><rect x="12" y="863.00" width="5" height="1" fill="#656565"/><rect x="14" y="869.25" width="3" height="1" fill="#656565"/><rect x="14" y="875.50" width="3" height="1" fill="#656565"/><rect x="14" y="881.75" width="3" height="1" fill="#656565"/><rect x="0" y="888" width="18" height="1" fill="#6a6a6a"/></svg>
<div class="t" style="left:41px;top:108px;font-size:10px;color:#bdbdbd;">0</div>
<div class="t" style="left:41px;top:122px;font-size:10px;color:#bdbdbd;">0</div>
<div class="t" style="left:41px;top:146px;font-size:10px;color:#bdbdbd;">6</div>
<div class="t" style="left:41px;top:158px;font-size:10px;color:#bdbdbd;">0</div>
<div class="t" style="left:41px;top:172px;font-size:10px;color:#bdbdbd;">0</div>
<div class="t" style="left:41px;top:196px;font-size:10px;color:#bdbdbd;">4</div>
<div class="t" style="left:41px;top:208px;font-size:10px;color:#bdbdbd;">0</div>
<div class="t" style="left:41px;top:222px;font-size:10px;color:#bdbdbd;">0</div>
<div class="t" style="left:41px;top:246px;font-size:10px;color:#bdbdbd;">2</div>
<div class="t" style="left:41px;top:258px;font-size:10px;color:#bdbdbd;">0</div>
<div class="t" style="left:41px;top:272px;font-size:10px;color:#bdbdbd;">0</div>
<div class="t" style="left:41px;top:296px;font-size:10px;color:#bdbdbd;">0</div>
<div class="t" style="left:41px;top:346px;font-size:10px;color:#bdbdbd;">2</div>
<div class="t" style="left:41px;top:358px;font-size:10px;color:#bdbdbd;">0</div>
<div class="t" style="left:41px;top:372px;font-size:10px;color:#bdbdbd;">0</div>
<div class="t" style="left:41px;top:396px;font-size:10px;color:#bdbdbd;">4</div>
<div class="t" style="left:41px;top:408px;font-size:10px;color:#bdbdbd;">0</div>
<div class="t" style="left:41px;top:422px;font-size:10px;color:#bdbdbd;">0</div>
<div class="t" style="left:41px;top:446px;font-size:10px;color:#bdbdbd;">6</div>
<div class="t" style="left:41px;top:458px;font-size:10px;color:#bdbdbd;">0</div>
<div class="t" style="left:41px;top:472px;font-size:10px;color:#bdbdbd;">0</div>
<div class="t" style="left:41px;top:496px;font-size:10px;color:#bdbdbd;">8</div>
<div class="t" style="left:41px;top:508px;font-size:10px;color:#bdbdbd;">0</div>
<div class="t" style="left:41px;top:522px;font-size:10px;color:#bdbdbd;">0</div>
<div class="t" style="left:41px;top:546px;font-size:10px;color:#bdbdbd;">1</div>
<div class="t" style="left:41px;top:557px;font-size:10px;color:#bdbdbd;">0</div>
<div class="t" style="left:41px;top:568px;font-size:10px;color:#bdbdbd;">0</div>
<div class="t" style="left:41px;top:579px;font-size:10px;color:#bdbdbd;">0</div>
<div class="t" style="left:41px;top:596px;font-size:10px;color:#bdbdbd;">1</div>
<div class="t" style="left:41px;top:607px;font-size:10px;color:#bdbdbd;">2</div>
<div class="t" style="left:41px;top:618px;font-size:10px;color:#bdbdbd;">0</div>
<div class="t" style="left:41px;top:629px;font-size:10px;color:#bdbdbd;">0</div>
<div class="t" style="left:41px;top:646px;font-size:10px;color:#bdbdbd;">1</div>
<div class="t" style="left:41px;top:657px;font-size:10px;color:#bdbdbd;">4</div>
<div class="t" style="left:41px;top:668px;font-size:10px;color:#bdbdbd;">0</div>
<div class="t" style="left:41px;top:679px;font-size:10px;color:#bdbdbd;">0</div>
<div class="t" style="left:41px;top:696px;font-size:10px;color:#bdbdbd;">1</div>
<div class="t" style="left:41px;top:707px;font-size:10px;color:#bdbdbd;">6</div>
<div class="t" style="left:41px;top:718px;font-size:10px;color:#bdbdbd;">0</div>
<div class="t" style="left:41px;top:729px;font-size:10px;color:#bdbdbd;">0</div>
<div class="t" style="left:41px;top:746px;font-size:10px;color:#bdbdbd;">1</div>
<div class="t" style="left:41px;top:757px;font-size:10px;color:#bdbdbd;">8</div>
<div class="t" style="left:41px;top:768px;font-size:10px;color:#bdbdbd;">0</div>
<div class="t" style="left:41px;top:779px;font-size:10px;color:#bdbdbd;">0</div>
<div class="t" style="left:41px;top:796px;font-size:10px;color:#bdbdbd;">2</div>
<div class="t" style="left:41px;top:807px;font-size:10px;color:#bdbdbd;">0</div>
<div class="t" style="left:41px;top:818px;font-size:10px;color:#bdbdbd;">0</div>
<div class="t" style="left:41px;top:829px;font-size:10px;color:#bdbdbd;">0</div>
<div class="t" style="left:41px;top:846px;font-size:10px;color:#bdbdbd;">2</div>
<div class="t" style="left:41px;top:857px;font-size:10px;color:#bdbdbd;">2</div>
<div class="t" style="left:41px;top:868px;font-size:10px;color:#bdbdbd;">0</div>
<div class="t" style="left:41px;top:879px;font-size:10px;color:#bdbdbd;">0</div>
<div class="t" style="left:41px;top:896px;font-size:10px;color:#bdbdbd;">2</div>
<div class="t" style="left:41px;top:907px;font-size:10px;color:#bdbdbd;">4</div>
<div class="t" style="left:41px;top:918px;font-size:10px;color:#bdbdbd;">0</div>
<div class="t" style="left:41px;top:929px;font-size:10px;color:#bdbdbd;">0</div>
<div class="t" style="left:41px;top:946px;font-size:10px;color:#bdbdbd;">2</div>
<div class="t" style="left:41px;top:957px;font-size:10px;color:#bdbdbd;">6</div>
<div class="t" style="left:41px;top:968px;font-size:10px;color:#bdbdbd;">0</div>
<div class="t" style="left:41px;top:979px;font-size:10px;color:#bdbdbd;">0</div>
<div class="a" style="left:57px;top:105px;width:1px;height:888px;background:#3a3a3a;"></div>
<div class="t" style="left:56px;top:995px;font-size:10px;color:#d8d8d8;">25%</div>
<div class="a" style="left:89px;top:993px;width:1px;height:11px;background:#3c3c3c;"></div>
<div class="a" style="left:40px;top:993px;width:1280px;height:1px;background:#555555;"></div>
<div class="t" style="left:114px;top:995px;font-size:10px;color:#d8d8d8;">4096 px x 2048 px (72 ppi)</div>
<svg style="left:264px;top:996px;" width="5" height="8" viewBox="0 0 5 8"><path d="M0.5 0.5L4 4L0.5 7.5" fill="none" stroke="#c8c8c8" stroke-width="1.1"/></svg>
<svg style="left:176px;top:292px" width="1026" height="514" viewBox="176 292 1026 514"><rect x="176" y="292" width="1026" height="514" fill="#0c0c06"/><rect x="177" y="293" width="1024" height="512" fill="#fff9db" /><rect x="177" y="801" width="1024" height="3" fill="#fbfbe6"/><rect x="504.5" y="297" width="2.5" height="170" fill="#7a7258" /><rect x="503" y="294.5" width="5.5" height="9" fill="#857b66" /><rect x="504.5" y="294.5" width="2.5" height="9" fill="#7a7258" /><rect x="713.5" y="297" width="2.5" height="170" fill="#7a7258" /><rect x="712.5" y="294.5" width="5.5" height="9" fill="#857b66" /><rect x="713.5" y="294.5" width="2.5" height="9" fill="#7a7258" /><rect x="512.4" y="306" width="9.5" height="166" fill="#83786a" rx="3"/><line x1="514.5" y1="312" x2="514.5" y2="468" stroke="#6c6252" stroke-width="1" opacity="0.8"/><line x1="519.5" y1="312" x2="519.5" y2="468" stroke="#6c6252" stroke-width="1" opacity="0.8"/><rect x="512" y="462" width="3" height="12" fill="#6c6352" /><rect x="516" y="464" width="3" height="9" fill="#6c6352" /><rect x="520" y="464" width="5" height="8" fill="#6c6352" /><rect x="698.6" y="306" width="9.5" height="166" fill="#83786a" rx="3"/><line x1="700.5" y1="312" x2="700.5" y2="468" stroke="#6c6252" stroke-width="1" opacity="0.8"/><line x1="705.5" y1="312" x2="705.5" y2="468" stroke="#6c6252" stroke-width="1" opacity="0.8"/><rect x="695" y="464" width="5" height="8" fill="#6c6352" /><rect x="701" y="464" width="3" height="9" fill="#6c6352" /><rect x="705" y="462" width="3" height="12" fill="#6c6352" /><rect x="512.5" y="355" width="9" height="3" fill="#74695a" /><rect x="699" y="355" width="9" height="3" fill="#74695a" /><rect x="512.5" y="403" width="9" height="3" fill="#74695a" /><rect x="699" y="403" width="9" height="3" fill="#74695a" /><rect x="531" y="301.5" width="158" height="3" fill="#7f7564" /><rect x="530.5" y="301" width="4" height="6" fill="#6f6654" /><rect x="685.5" y="301" width="4" height="6" fill="#6f6654" /><rect x="534.3" y="303" width="151.4" height="161" fill="#8b7f6e" /><rect x="535" y="301" width="17" height="2" fill="#fffff0" /><rect x="534.3" y="307" width="15" height="157" fill="#8d7f72" /><rect x="670" y="307" width="15.7" height="157" fill="#8d7f72" /><line x1="549.5" y1="318" x2="549.5" y2="464" stroke="#6e6455" stroke-width="1.2" opacity="1"/><line x1="669.5" y1="307" x2="669.5" y2="464" stroke="#6e6455" stroke-width="1.2" opacity="1"/><line x1="610" y1="305" x2="610" y2="464" stroke="#6e6455" stroke-width="1.2" opacity="1"/><line x1="611" y1="308" x2="553" y2="462" stroke="#6e6455" stroke-width="1" opacity="0.8"/><line x1="611" y1="308" x2="667" y2="462" stroke="#6e6455" stroke-width="1" opacity="0.9"/><rect x="534.3" y="462" width="151.4" height="2" fill="#74695a" /><rect x="507" y="482.8" width="202" height="9" fill="#7d7362" /><rect x="530" y="490" width="156" height="5" fill="#7d7362" /><rect x="590" y="491.5" width="36" height="3" fill="#fff9db" rx="1.5"/><line x1="607" y1="483" x2="607" y2="494" stroke="#6b6152" stroke-width="1" opacity="0.7"/><rect x="544" y="505.2" width="127.5" height="17.5" fill="#7f7564" /><line x1="544" y1="510" x2="671.5" y2="510" stroke="#6e6455" stroke-width="1" opacity="0.6"/><line x1="544" y1="514" x2="590" y2="514" stroke="#6e6455" stroke-width="1" opacity="0.6"/><rect x="589" y="516.5" width="38" height="3.5" fill="#fff9db" rx="1.7"/><line x1="607.5" y1="505" x2="607.5" y2="523" stroke="#6b6152" stroke-width="1" opacity="0.6"/><rect x="549.5" y="524.7" width="119" height="3.4" fill="#7d7362" /><rect x="549.5" y="530" width="119" height="2.8" fill="#7d7362" /><rect x="517.8" y="526.2" width="16.5" height="159.5" fill="#847969" /><line x1="519.8" y1="528" x2="519.8" y2="684" stroke="#6f6556" stroke-width="1" opacity="0.6"/><line x1="523.0" y1="528" x2="523.0" y2="684" stroke="#6f6556" stroke-width="1" opacity="0.6"/><line x1="526.1999999999999" y1="528" x2="526.1999999999999" y2="684" stroke="#6f6556" stroke-width="1" opacity="0.6"/><line x1="529.4" y1="528" x2="529.4" y2="684" stroke="#6f6556" stroke-width="1" opacity="0.6"/><line x1="532.5999999999999" y1="528" x2="532.5999999999999" y2="684" stroke="#6f6556" stroke-width="1" opacity="0.6"/><rect x="679" y="526.2" width="16.5" height="159.5" fill="#847969" /><line x1="681.0" y1="528" x2="681.0" y2="684" stroke="#6f6556" stroke-width="1" opacity="0.6"/><line x1="684.2" y1="528" x2="684.2" y2="684" stroke="#6f6556" stroke-width="1" opacity="0.6"/><line x1="687.4" y1="528" x2="687.4" y2="684" stroke="#6f6556" stroke-width="1" opacity="0.6"/><line x1="690.6" y1="528" x2="690.6" y2="684" stroke="#6f6556" stroke-width="1" opacity="0.6"/><line x1="693.8" y1="528" x2="693.8" y2="684" stroke="#6f6556" stroke-width="1" opacity="0.6"/><rect x="518" y="688.5" width="12" height="4" fill="#6c6352" rx="2"/><rect x="520" y="694" width="10" height="3" fill="#6c6352" /><rect x="521" y="698" width="9" height="3" fill="#6c6352" /><rect x="684" y="688.5" width="12" height="4" fill="#6c6352" rx="2"/><rect x="684" y="694" width="10" height="3" fill="#6c6352" /><rect x="684" y="698" width="9" height="3" fill="#6c6352" /><rect x="541.8" y="535" width="133" height="138" fill="#857a6b" /><rect x="541.8" y="535" width="1" height="138" fill="#75695b" opacity="0.85"/><rect x="545.8" y="535" width="2" height="138" fill="#6a5f50" opacity="0.85"/><rect x="548.8" y="535" width="2" height="138" fill="#6f6556" opacity="0.85"/><rect x="553.3" y="535" width="1.5" height="138" fill="#75695b" opacity="0.85"/><rect x="556.8" y="535" width="2" height="138" fill="#6a5f50" opacity="0.85"/><rect x="561.3" y="535" width="1.5" height="138" fill="#75695b" opacity="0.85"/><rect x="564.8" y="535" width="2" height="138" fill="#75695b" opacity="0.85"/><rect x="569.3" y="535" width="2" height="138" fill="#6f6556" opacity="0.85"/><rect x="572.3" y="535" width="1" height="138" fill="#6f6556" opacity="0.85"/><rect x="576.3" y="535" width="1" height="138" fill="#97897a" opacity="0.85"/><rect x="580.8" y="535" width="2" height="138" fill="#6a5f50" opacity="0.85"/><rect x="585.3" y="535" width="1.5" height="138" fill="#6a5f50" opacity="0.85"/><rect x="588.8" y="535" width="1.5" height="138" fill="#6f6556" opacity="0.85"/><rect x="591.8" y="535" width="1" height="138" fill="#6a5f50" opacity="0.85"/><rect x="595.3" y="535" width="1.5" height="138" fill="#6a5f50" opacity="0.85"/><rect x="599.3" y="535" width="1.5" height="138" fill="#6a5f50" opacity="0.85"/><rect x="603.3" y="535" width="2" height="138" fill="#6a5f50" opacity="0.85"/><rect x="606.8" y="535" width="1.5" height="138" fill="#6f6556" opacity="0.85"/><rect x="610.8" y="535" width="2" height="138" fill="#75695b" opacity="0.85"/><rect x="614.8" y="535" width="2" height="138" fill="#6f6556" opacity="0.85"/><rect x="618.3" y="535" width="2" height="138" fill="#97897a" opacity="0.85"/><rect x="622.3" y="535" width="1" height="138" fill="#6f6556" opacity="0.85"/><rect x="626.8" y="535" width="2" height="138" fill="#6a5f50" opacity="0.85"/><rect x="629.8" y="535" width="1.5" height="138" fill="#6f6556" opacity="0.85"/><rect x="634.3" y="535" width="1" height="138" fill="#6f6556" opacity="0.85"/><rect x="638.3" y="535" width="1.5" height="138" fill="#6a5f50" opacity="0.85"/><rect x="641.3" y="535" width="1" height="138" fill="#6f6556" opacity="0.85"/><rect x="645.8" y="535" width="2" height="138" fill="#97897a" opacity="0.85"/><rect x="649.8" y="535" width="2" height="138" fill="#75695b" opacity="0.85"/><rect x="652.8" y="535" width="1.5" height="138" fill="#6f6556" opacity="0.85"/><rect x="655.8" y="535" width="1" height="138" fill="#6f6556" opacity="0.85"/><rect x="659.3" y="535" width="1.5" height="138" fill="#97897a" opacity="0.85"/><rect x="663.3" y="535" width="1" height="138" fill="#6f6556" opacity="0.85"/><rect x="667.3" y="535" width="1.5" height="138" fill="#97897a" opacity="0.85"/><rect x="670.8" y="535" width="1.5" height="138" fill="#6a5f50" opacity="0.85"/><line x1="541.8" y1="535.5" x2="674.8" y2="535.5" stroke="#6c6252" stroke-width="1" opacity="1"/><line x1="541.8" y1="672.5" x2="674.8" y2="672.5" stroke="#6c6252" stroke-width="1" opacity="1"/><rect x="542.8" y="676.6" width="128.6" height="25.8" fill="#7f7564" /><line x1="542.8" y1="681" x2="671.4" y2="681" stroke="#6e6455" stroke-width="1" opacity="0.6"/><line x1="542.8" y1="686" x2="671.4" y2="686" stroke="#6e6455" stroke-width="1" opacity="0.6"/><line x1="542.8" y1="691" x2="671.4" y2="691" stroke="#6e6455" stroke-width="1" opacity="0.6"/><line x1="542.8" y1="696" x2="671.4" y2="696" stroke="#6e6455" stroke-width="1" opacity="0.6"/><line x1="542.8" y1="700" x2="671.4" y2="700" stroke="#6e6455" stroke-width="1" opacity="0.6"/><line x1="575" y1="677" x2="575" y2="702" stroke="#6e6455" stroke-width="1" opacity="0.5"/><line x1="607" y1="677" x2="607" y2="702" stroke="#6e6455" stroke-width="1" opacity="0.5"/><line x1="640" y1="677" x2="640" y2="702" stroke="#6e6455" stroke-width="1" opacity="0.5"/><rect x="726" y="304.2" width="454.5999999999999" height="163.8" fill="#8b7f6e" /><line x1="727" y1="328.5" x2="757.6" y2="305.2" stroke="#64594a" stroke-width="1" opacity="0.8"/><line x1="728" y1="328.5" x2="758.6" y2="305.2" stroke="#a39684" stroke-width="1" opacity="0.3"/><line x1="727" y1="358.3" x2="757.6" y2="329.5" stroke="#64594a" stroke-width="1" opacity="0.8"/><line x1="728" y1="358.3" x2="758.6" y2="329.5" stroke="#a39684" stroke-width="1" opacity="0.3"/><line x1="727" y1="388.3" x2="757.6" y2="359.3" stroke="#64594a" stroke-width="1" opacity="0.8"/><line x1="728" y1="388.3" x2="758.6" y2="359.3" stroke="#a39684" stroke-width="1" opacity="0.3"/><line x1="727" y1="419.7" x2="757.6" y2="389.3" stroke="#64594a" stroke-width="1" opacity="0.8"/><line x1="728" y1="419.7" x2="758.6" y2="389.3" stroke="#a39684" stroke-width="1" opacity="0.3"/><line x1="727" y1="440.7" x2="757.6" y2="420.7" stroke="#64594a" stroke-width="1" opacity="0.8"/><line x1="728" y1="440.7" x2="758.6" y2="420.7" stroke="#a39684" stroke-width="1" opacity="0.3"/><line x1="758.6" y1="328.5" x2="791.1" y2="305.2" stroke="#64594a" stroke-width="1" opacity="0.8"/><line x1="759.6" y1="328.5" x2="792.1" y2="305.2" stroke="#a39684" stroke-width="1" opacity="0.3"/><line x1="758.6" y1="358.3" x2="791.1" y2="329.5" stroke="#64594a" stroke-width="1" opacity="0.8"/><line x1="759.6" y1="358.3" x2="792.1" y2="329.5" stroke="#a39684" stroke-width="1" opacity="0.3"/><line x1="758.6" y1="388.3" x2="791.1" y2="359.3" stroke="#64594a" stroke-width="1" opacity="0.8"/><line x1="759.6" y1="388.3" x2="792.1" y2="359.3" stroke="#a39684" stroke-width="1" opacity="0.3"/><line x1="758.6" y1="419.7" x2="791.1" y2="389.3" stroke="#64594a" stroke-width="1" opacity="0.8"/><line x1="759.6" y1="419.7" x2="792.1" y2="389.3" stroke="#a39684" stroke-width="1" opacity="0.3"/><line x1="758.6" y1="420.7" x2="791.1" y2="440.7" stroke="#64594a" stroke-width="1" opacity="0.8"/><line x1="759.6" y1="420.7" x2="792.1" y2="440.7" stroke="#a39684" stroke-width="1" opacity="0.3"/><line x1="792.1" y1="328.5" x2="821.4" y2="305.2" stroke="#64594a" stroke-width="1" opacity="0.8"/><line x1="793.1" y1="328.5" x2="822.4" y2="305.2" stroke="#a39684" stroke-width="1" opacity="0.3"/><line x1="792.1" y1="358.3" x2="821.4" y2="329.5" stroke="#64594a" stroke-width="1" opacity="0.8"/><line x1="793.1" y1="358.3" x2="822.4" y2="329.5" stroke="#a39684" stroke-width="1" opacity="0.3"/><line x1="792.1" y1="388.3" x2="821.4" y2="359.3" stroke="#64594a" stroke-width="1" opacity="0.8"/><line x1="793.1" y1="388.3" x2="822.4" y2="359.3" stroke="#a39684" stroke-width="1" opacity="0.3"/><line x1="792.1" y1="419.7" x2="821.4" y2="389.3" stroke="#64594a" stroke-width="1" opacity="0.8"/><line x1="793.1" y1="419.7" x2="822.4" y2="389.3" stroke="#a39684" stroke-width="1" opacity="0.3"/><line x1="792.1" y1="420.7" x2="821.4" y2="440.7" stroke="#64594a" stroke-width="1" opacity="0.8"/><line x1="793.1" y1="420.7" x2="822.4" y2="440.7" stroke="#a39684" stroke-width="1" opacity="0.3"/><line x1="822.4" y1="328.5" x2="853.9" y2="305.2" stroke="#64594a" stroke-width="1" opacity="0.8"/><line x1="823.4" y1="328.5" x2="854.9" y2="305.2" stroke="#a39684" stroke-width="1" opacity="0.3"/><line x1="822.4" y1="358.3" x2="853.9" y2="329.5" stroke="#64594a" stroke-width="1" opacity="0.8"/><line x1="823.4" y1="358.3" x2="854.9" y2="329.5" stroke="#a39684" stroke-width="1" opacity="0.3"/><line x1="822.4" y1="388.3" x2="853.9" y2="359.3" stroke="#64594a" stroke-width="1" opacity="0.8"/><line x1="823.4" y1="388.3" x2="854.9" y2="359.3" stroke="#a39684" stroke-width="1" opacity="0.3"/><line x1="822.4" y1="419.7" x2="853.9" y2="389.3" stroke="#64594a" stroke-width="1" opacity="0.8"/><line x1="823.4" y1="419.7" x2="854.9" y2="389.3" stroke="#a39684" stroke-width="1" opacity="0.3"/><line x1="822.4" y1="440.7" x2="853.9" y2="420.7" stroke="#64594a" stroke-width="1" opacity="0.8"/><line x1="823.4" y1="440.7" x2="854.9" y2="420.7" stroke="#a39684" stroke-width="1" opacity="0.3"/><line x1="854.9" y1="328.5" x2="887" y2="305.2" stroke="#64594a" stroke-width="1" opacity="0.8"/><line x1="855.9" y1="328.5" x2="888" y2="305.2" stroke="#a39684" stroke-width="1" opacity="0.3"/><line x1="854.9" y1="358.3" x2="887" y2="329.5" stroke="#64594a" stroke-width="1" opacity="0.8"/><line x1="855.9" y1="358.3" x2="888" y2="329.5" stroke="#a39684" stroke-width="1" opacity="0.3"/><line x1="854.9" y1="388.3" x2="887" y2="359.3" stroke="#64594a" stroke-width="1" opacity="0.8"/><line x1="855.9" y1="388.3" x2="888" y2="359.3" stroke="#a39684" stroke-width="1" opacity="0.3"/><line x1="854.9" y1="419.7" x2="887" y2="389.3" stroke="#64594a" stroke-width="1" opacity="0.8"/><line x1="855.9" y1="419.7" x2="888" y2="389.3" stroke="#a39684" stroke-width="1" opacity="0.3"/><line x1="854.9" y1="420.7" x2="887" y2="440.7" stroke="#64594a" stroke-width="1" opacity="0.8"/><line x1="855.9" y1="420.7" x2="888" y2="440.7" stroke="#a39684" stroke-width="1" opacity="0.3"/><line x1="888" y1="328.5" x2="920.9" y2="305.2" stroke="#64594a" stroke-width="1" opacity="0.8"/><line x1="889" y1="328.5" x2="921.9" y2="305.2" stroke="#a39684" stroke-width="1" opacity="0.3"/><line x1="888" y1="358.3" x2="920.9" y2="329.5" stroke="#64594a" stroke-width="1" opacity="0.8"/><line x1="889" y1="358.3" x2="921.9" y2="329.5" stroke="#a39684" stroke-width="1" opacity="0.3"/><line x1="888" y1="388.3" x2="920.9" y2="359.3" stroke="#64594a" stroke-width="1" opacity="0.8"/><line x1="889" y1="388.3" x2="921.9" y2="359.3" stroke="#a39684" stroke-width="1" opacity="0.3"/><line x1="888" y1="419.7" x2="920.9" y2="389.3" stroke="#64594a" stroke-width="1" opacity="0.8"/><line x1="889" y1="419.7" x2="921.9" y2="389.3" stroke="#a39684" stroke-width="1" opacity="0.3"/><line x1="888" y1="420.7" x2="920.9" y2="440.7" stroke="#64594a" stroke-width="1" opacity="0.8"/><line x1="889" y1="420.7" x2="921.9" y2="440.7" stroke="#a39684" stroke-width="1" opacity="0.3"/><line x1="921.9" y1="328.5" x2="952.9" y2="305.2" stroke="#64594a" stroke-width="1" opacity="0.8"/><line x1="922.9" y1="328.5" x2="953.9" y2="305.2" stroke="#a39684" stroke-width="1" opacity="0.3"/><line x1="921.9" y1="358.3" x2="952.9" y2="329.5" stroke="#64594a" stroke-width="1" opacity="0.8"/><line x1="922.9" y1="358.3" x2="953.9" y2="329.5" stroke="#a39684" stroke-width="1" opacity="0.3"/><line x1="921.9" y1="388.3" x2="952.9" y2="359.3" stroke="#64594a" stroke-width="1" opacity="0.8"/><line x1="922.9" y1="388.3" x2="953.9" y2="359.3" stroke="#a39684" stroke-width="1" opacity="0.3"/><line x1="921.9" y1="419.7" x2="952.9" y2="389.3" stroke="#64594a" stroke-width="1" opacity="0.8"/><line x1="922.9" y1="419.7" x2="953.9" y2="389.3" stroke="#a39684" stroke-width="1" opacity="0.3"/><line x1="921.9" y1="440.7" x2="952.9" y2="420.7" stroke="#64594a" stroke-width="1" opacity="0.8"/><line x1="922.9" y1="440.7" x2="953.9" y2="420.7" stroke="#a39684" stroke-width="1" opacity="0.3"/><line x1="953.9" y1="328.5" x2="984.3" y2="305.2" stroke="#64594a" stroke-width="1" opacity="0.8"/><line x1="954.9" y1="328.5" x2="985.3" y2="305.2" stroke="#a39684" stroke-width="1" opacity="0.3"/><line x1="953.9" y1="358.3" x2="984.3" y2="329.5" stroke="#64594a" stroke-width="1" opacity="0.8"/><line x1="954.9" y1="358.3" x2="985.3" y2="329.5" stroke="#a39684" stroke-width="1" opacity="0.3"/><line x1="953.9" y1="388.3" x2="984.3" y2="359.3" stroke="#64594a" stroke-width="1" opacity="0.8"/><line x1="954.9" y1="388.3" x2="985.3" y2="359.3" stroke="#a39684" stroke-width="1" opacity="0.3"/><line x1="953.9" y1="419.7" x2="984.3" y2="389.3" stroke="#64594a" stroke-width="1" opacity="0.8"/><line x1="954.9" y1="419.7" x2="985.3" y2="389.3" stroke="#a39684" stroke-width="1" opacity="0.3"/><line x1="953.9" y1="420.7" x2="984.3" y2="440.7" stroke="#64594a" stroke-width="1" opacity="0.8"/><line x1="954.9" y1="420.7" x2="985.3" y2="440.7" stroke="#a39684" stroke-width="1" opacity="0.3"/><line x1="985.3" y1="328.5" x2="1015.7" y2="305.2" stroke="#64594a" stroke-width="1" opacity="0.8"/><line x1="986.3" y1="328.5" x2="1016.7" y2="305.2" stroke="#a39684" stroke-width="1" opacity="0.3"/><line x1="985.3" y1="358.3" x2="1015.7" y2="329.5" stroke="#64594a" stroke-width="1" opacity="0.8"/><line x1="986.3" y1="358.3" x2="1016.7" y2="329.5" stroke="#a39684" stroke-width="1" opacity="0.3"/><line x1="985.3" y1="388.3" x2="1015.7" y2="359.3" stroke="#64594a" stroke-width="1" opacity="0.8"/><line x1="986.3" y1="388.3" x2="1016.7" y2="359.3" stroke="#a39684" stroke-width="1" opacity="0.3"/><line x1="985.3" y1="419.7" x2="1015.7" y2="389.3" stroke="#64594a" stroke-width="1" opacity="0.8"/><line x1="986.3" y1="419.7" x2="1016.7" y2="389.3" stroke="#a39684" stroke-width="1" opacity="0.3"/><line x1="985.3" y1="420.7" x2="1015.7" y2="440.7" stroke="#64594a" stroke-width="1" opacity="0.8"/><line x1="986.3" y1="420.7" x2="1016.7" y2="440.7" stroke="#a39684" stroke-width="1" opacity="0.3"/><line x1="1016.7" y1="328.5" x2="1047.3" y2="305.2" stroke="#64594a" stroke-width="1" opacity="0.8"/><line x1="1017.7" y1="328.5" x2="1048.3" y2="305.2" stroke="#a39684" stroke-width="1" opacity="0.3"/><line x1="1016.7" y1="358.3" x2="1047.3" y2="329.5" stroke="#64594a" stroke-width="1" opacity="0.8"/><line x1="1017.7" y1="358.3" x2="1048.3" y2="329.5" stroke="#a39684" stroke-width="1" opacity="0.3"/><line x1="1016.7" y1="388.3" x2="1047.3" y2="359.3" stroke="#64594a" stroke-width="1" opacity="0.8"/><line x1="1017.7" y1="388.3" x2="1048.3" y2="359.3" stroke="#a39684" stroke-width="1" opacity="0.3"/><line x1="1016.7" y1="419.7" x2="1047.3" y2="389.3" stroke="#64594a" stroke-width="1" opacity="0.8"/><line x1="1017.7" y1="419.7" x2="1048.3" y2="389.3" stroke="#a39684" stroke-width="1" opacity="0.3"/><line x1="1016.7" y1="440.7" x2="1047.3" y2="420.7" stroke="#64594a" stroke-width="1" opacity="0.8"/><line x1="1017.7" y1="440.7" x2="1048.3" y2="420.7" stroke="#a39684" stroke-width="1" opacity="0.3"/><line x1="1048.3" y1="328.5" x2="1079.2" y2="305.2" stroke="#64594a" stroke-width="1" opacity="0.8"/><line x1="1049.3" y1="328.5" x2="1080.2" y2="305.2" stroke="#a39684" stroke-width="1" opacity="0.3"/><line x1="1048.3" y1="358.3" x2="1079.2" y2="329.5" stroke="#64594a" stroke-width="1" opacity="0.8"/><line x1="1049.3" y1="358.3" x2="1080.2" y2="329.5" stroke="#a39684" stroke-width="1" opacity="0.3"/><line x1="1048.3" y1="388.3" x2="1079.2" y2="359.3" stroke="#64594a" stroke-width="1" opacity="0.8"/><line x1="1049.3" y1="388.3" x2="1080.2" y2="359.3" stroke="#a39684" stroke-width="1" opacity="0.3"/><line x1="1048.3" y1="419.7" x2="1079.2" y2="389.3" stroke="#64594a" stroke-width="1" opacity="0.8"/><line x1="1049.3" y1="419.7" x2="1080.2" y2="389.3" stroke="#a39684" stroke-width="1" opacity="0.3"/><line x1="1048.3" y1="420.7" x2="1079.2" y2="440.7" stroke="#64594a" stroke-width="1" opacity="0.8"/><line x1="1049.3" y1="420.7" x2="1080.2" y2="440.7" stroke="#a39684" stroke-width="1" opacity="0.3"/><line x1="1080.2" y1="328.5" x2="1111.6" y2="305.2" stroke="#64594a" stroke-width="1" opacity="0.8"/><line x1="1081.2" y1="328.5" x2="1112.6" y2="305.2" stroke="#a39684" stroke-width="1" opacity="0.3"/><line x1="1080.2" y1="358.3" x2="1111.6" y2="329.5" stroke="#64594a" stroke-width="1" opacity="0.8"/><line x1="1081.2" y1="358.3" x2="1112.6" y2="329.5" stroke="#a39684" stroke-width="1" opacity="0.3"/><line x1="1080.2" y1="388.3" x2="1111.6" y2="359.3" stroke="#64594a" stroke-width="1" opacity="0.8"/><line x1="1081.2" y1="388.3" x2="1112.6" y2="359.3" stroke="#a39684" stroke-width="1" opacity="0.3"/><line x1="1080.2" y1="419.7" x2="1111.6" y2="389.3" stroke="#64594a" stroke-width="1" opacity="0.8"/><line x1="1081.2" y1="419.7" x2="1112.6" y2="389.3" stroke="#a39684" stroke-width="1" opacity="0.3"/><line x1="1080.2" y1="420.7" x2="1111.6" y2="440.7" stroke="#64594a" stroke-width="1" opacity="0.8"/><line x1="1081.2" y1="420.7" x2="1112.6" y2="440.7" stroke="#a39684" stroke-width="1" opacity="0.3"/><line x1="1112.6" y1="328.5" x2="1148.8" y2="305.2" stroke="#64594a" stroke-width="1" opacity="0.8"/><line x1="1113.6" y1="328.5" x2="1149.8" y2="305.2" stroke="#a39684" stroke-width="1" opacity="0.3"/><line x1="1112.6" y1="358.3" x2="1148.8" y2="329.5" stroke="#64594a" stroke-width="1" opacity="0.8"/><line x1="1113.6" y1="358.3" x2="1149.8" y2="329.5" stroke="#a39684" stroke-width="1" opacity="0.3"/><line x1="1112.6" y1="388.3" x2="1148.8" y2="359.3" stroke="#64594a" stroke-width="1" opacity="0.8"/><line x1="1113.6" y1="388.3" x2="1149.8" y2="359.3" stroke="#a39684" stroke-width="1" opacity="0.3"/><line x1="1112.6" y1="419.7" x2="1148.8" y2="389.3" stroke="#64594a" stroke-width="1" opacity="0.8"/><line x1="1113.6" y1="419.7" x2="1149.8" y2="389.3" stroke="#a39684" stroke-width="1" opacity="0.3"/><line x1="1112.6" y1="440.7" x2="1148.8" y2="420.7" stroke="#64594a" stroke-width="1" opacity="0.8"/><line x1="1113.6" y1="440.7" x2="1149.8" y2="420.7" stroke="#a39684" stroke-width="1" opacity="0.3"/><line x1="1149.8" y1="328.5" x2="1180.6" y2="305.2" stroke="#64594a" stroke-width="1" opacity="0.8"/><line x1="1150.8" y1="328.5" x2="1181.6" y2="305.2" stroke="#a39684" stroke-width="1" opacity="0.3"/><line x1="1149.8" y1="358.3" x2="1180.6" y2="329.5" stroke="#64594a" stroke-width="1" opacity="0.8"/><line x1="1150.8" y1="358.3" x2="1181.6" y2="329.5" stroke="#a39684" stroke-width="1" opacity="0.3"/><line x1="1149.8" y1="388.3" x2="1180.6" y2="359.3" stroke="#64594a" stroke-width="1" opacity="0.8"/><line x1="1150.8" y1="388.3" x2="1181.6" y2="359.3" stroke="#a39684" stroke-width="1" opacity="0.3"/><line x1="1149.8" y1="419.7" x2="1180.6" y2="389.3" stroke="#64594a" stroke-width="1" opacity="0.8"/><line x1="1150.8" y1="419.7" x2="1181.6" y2="389.3" stroke="#a39684" stroke-width="1" opacity="0.3"/><line x1="1149.8" y1="420.7" x2="1180.6" y2="440.7" stroke="#64594a" stroke-width="1" opacity="0.8"/><line x1="1150.8" y1="420.7" x2="1181.6" y2="440.7" stroke="#a39684" stroke-width="1" opacity="0.3"/><line x1="726" y1="443.5" x2="1180.6" y2="443.5" stroke="#6f6554" stroke-width="1" opacity="0.7"/><line x1="726" y1="444.5" x2="1180.6" y2="444.5" stroke="#6f6554" stroke-width="1" opacity="0.5"/><line x1="726" y1="447.5" x2="1180.6" y2="447.5" stroke="#5a4f41" stroke-width="1" opacity="0.8"/><line x1="726" y1="455.5" x2="1180.6" y2="455.5" stroke="#74695a" stroke-width="1" opacity="0.35"/><line x1="761.5" y1="304.2" x2="761.5" y2="468" stroke="#a09484" stroke-width="1" opacity="0.35"/><line x1="758.5" y1="304.2" x2="758.5" y2="468" stroke="#5a4f41" stroke-width="1" opacity="0.85"/><line x1="794.5" y1="304.2" x2="794.5" y2="468" stroke="#a09484" stroke-width="1" opacity="0.35"/><line x1="791.5" y1="304.2" x2="791.5" y2="468" stroke="#5a4f41" stroke-width="1" opacity="0.85"/><line x1="824.5" y1="304.2" x2="824.5" y2="468" stroke="#a09484" stroke-width="1" opacity="0.35"/><line x1="821.5" y1="304.2" x2="821.5" y2="468" stroke="#5a4f41" stroke-width="1" opacity="0.85"/><line x1="857.5" y1="304.2" x2="857.5" y2="468" stroke="#a09484" stroke-width="1" opacity="0.35"/><line x1="854.5" y1="304.2" x2="854.5" y2="468" stroke="#5a4f41" stroke-width="1" opacity="0.85"/><line x1="890.5" y1="304.2" x2="890.5" y2="468" stroke="#a09484" stroke-width="1" opacity="0.35"/><line x1="887.5" y1="304.2" x2="887.5" y2="468" stroke="#5a4f41" stroke-width="1" opacity="0.85"/><line x1="924.5" y1="304.2" x2="924.5" y2="468" stroke="#a09484" stroke-width="1" opacity="0.35"/><line x1="921.5" y1="304.2" x2="921.5" y2="468" stroke="#5a4f41" stroke-width="1" opacity="0.85"/><line x1="956.5" y1="304.2" x2="956.5" y2="468" stroke="#a09484" stroke-width="1" opacity="0.35"/><line x1="953.5" y1="304.2" x2="953.5" y2="468" stroke="#5a4f41" stroke-width="1" opacity="0.85"/><line x1="987.5" y1="304.2" x2="987.5" y2="468" stroke="#a09484" stroke-width="1" opacity="0.35"/><line x1="984.5" y1="304.2" x2="984.5" y2="468" stroke="#5a4f41" stroke-width="1" opacity="0.85"/><line x1="1019.5" y1="304.2" x2="1019.5" y2="468" stroke="#a09484" stroke-width="1" opacity="0.35"/><line x1="1016.5" y1="304.2" x2="1016.5" y2="468" stroke="#5a4f41" stroke-width="1" opacity="0.85"/><line x1="1050.5" y1="304.2" x2="1050.5" y2="468" stroke="#a09484" stroke-width="1" opacity="0.35"/><line x1="1047.5" y1="304.2" x2="1047.5" y2="468" stroke="#5a4f41" stroke-width="1" opacity="0.85"/><line x1="1082.5" y1="304.2" x2="1082.5" y2="468" stroke="#a09484" stroke-width="1" opacity="0.35"/><line x1="1079.5" y1="304.2" x2="1079.5" y2="468" stroke="#5a4f41" stroke-width="1" opacity="0.85"/><line x1="1115.5" y1="304.2" x2="1115.5" y2="468" stroke="#a09484" stroke-width="1" opacity="0.35"/><line x1="1112.5" y1="304.2" x2="1112.5" y2="468" stroke="#5a4f41" stroke-width="1" opacity="0.85"/><line x1="1152.5" y1="304.2" x2="1152.5" y2="468" stroke="#a09484" stroke-width="1" opacity="0.35"/><line x1="1149.5" y1="304.2" x2="1149.5" y2="468" stroke="#5a4f41" stroke-width="1" opacity="0.85"/><line x1="726" y1="328.5" x2="1180.6" y2="328.5" stroke="#5a4f41" stroke-width="1" opacity="0.85"/><line x1="726" y1="358.5" x2="1180.6" y2="358.5" stroke="#5a4f41" stroke-width="1" opacity="0.85"/><line x1="726" y1="388.5" x2="1180.6" y2="388.5" stroke="#5a4f41" stroke-width="1" opacity="0.85"/><line x1="726" y1="420.5" x2="1180.6" y2="420.5" stroke="#5a4f41" stroke-width="1" opacity="0.85"/><line x1="726" y1="441.5" x2="1180.6" y2="441.5" stroke="#5a4f41" stroke-width="1" opacity="0.85"/><line x1="726" y1="465.5" x2="1180.6" y2="465.5" stroke="#5a4f41" stroke-width="1" opacity="0.85"/><rect x="726.5" y="304.7" width="453.5999999999999" height="162.8" fill="none" stroke="#6f6555" stroke-width="1.2"/><rect x="727" y="470.5" width="450" height="3" fill="#7b7160" /><rect x="726" y="465" width="454.6" height="3" fill="#7a705c" /><rect x="720.5" y="524.2" width="456.0" height="163.0999999999999" fill="#8b7f6e" /><line x1="721.5" y1="525.2" x2="753.9" y2="547.4" stroke="#64594a" stroke-width="1" opacity="0.8"/><line x1="722.5" y1="525.2" x2="754.9" y2="547.4" stroke="#a39684" stroke-width="1" opacity="0.3"/><line x1="721.5" y1="548.4" x2="753.9" y2="577.7" stroke="#64594a" stroke-width="1" opacity="0.8"/><line x1="722.5" y1="548.4" x2="754.9" y2="577.7" stroke="#a39684" stroke-width="1" opacity="0.3"/><line x1="721.5" y1="578.7" x2="753.9" y2="608" stroke="#64594a" stroke-width="1" opacity="0.8"/><line x1="722.5" y1="578.7" x2="754.9" y2="608" stroke="#a39684" stroke-width="1" opacity="0.3"/><line x1="721.5" y1="609" x2="753.9" y2="639.2" stroke="#64594a" stroke-width="1" opacity="0.8"/><line x1="722.5" y1="609" x2="754.9" y2="639.2" stroke="#a39684" stroke-width="1" opacity="0.3"/><line x1="721.5" y1="658" x2="753.9" y2="640.2" stroke="#64594a" stroke-width="1" opacity="0.8"/><line x1="722.5" y1="658" x2="754.9" y2="640.2" stroke="#a39684" stroke-width="1" opacity="0.3"/><line x1="754.9" y1="525.2" x2="790" y2="547.4" stroke="#64594a" stroke-width="1" opacity="0.8"/><line x1="755.9" y1="525.2" x2="791" y2="547.4" stroke="#a39684" stroke-width="1" opacity="0.3"/><line x1="754.9" y1="548.4" x2="790" y2="577.7" stroke="#64594a" stroke-width="1" opacity="0.8"/><line x1="755.9" y1="548.4" x2="791" y2="577.7" stroke="#a39684" stroke-width="1" opacity="0.3"/><line x1="754.9" y1="578.7" x2="790" y2="608" stroke="#64594a" stroke-width="1" opacity="0.8"/><line x1="755.9" y1="578.7" x2="791" y2="608" stroke="#a39684" stroke-width="1" opacity="0.3"/><line x1="754.9" y1="609" x2="790" y2="639.2" stroke="#64594a" stroke-width="1" opacity="0.8"/><line x1="755.9" y1="609" x2="791" y2="639.2" stroke="#a39684" stroke-width="1" opacity="0.3"/><line x1="754.9" y1="640.2" x2="790" y2="658" stroke="#64594a" stroke-width="1" opacity="0.8"/><line x1="755.9" y1="640.2" x2="791" y2="658" stroke="#a39684" stroke-width="1" opacity="0.3"/><line x1="791" y1="525.2" x2="822.4" y2="547.4" stroke="#64594a" stroke-width="1" opacity="0.8"/><line x1="792" y1="525.2" x2="823.4" y2="547.4" stroke="#a39684" stroke-width="1" opacity="0.3"/><line x1="791" y1="548.4" x2="822.4" y2="577.7" stroke="#64594a" stroke-width="1" opacity="0.8"/><line x1="792" y1="548.4" x2="823.4" y2="577.7" stroke="#a39684" stroke-width="1" opacity="0.3"/><line x1="791" y1="578.7" x2="822.4" y2="608" stroke="#64594a" stroke-width="1" opacity="0.8"/><line x1="792" y1="578.7" x2="823.4" y2="608" stroke="#a39684" stroke-width="1" opacity="0.3"/><line x1="791" y1="609" x2="822.4" y2="639.2" stroke="#64594a" stroke-width="1" opacity="0.8"/><line x1="792" y1="609" x2="823.4" y2="639.2" stroke="#a39684" stroke-width="1" opacity="0.3"/><line x1="791" y1="658" x2="822.4" y2="640.2" stroke="#64594a" stroke-width="1" opacity="0.8"/><line x1="792" y1="658" x2="823.4" y2="640.2" stroke="#a39684" stroke-width="1" opacity="0.3"/><line x1="823.4" y1="525.2" x2="854.3" y2="547.4" stroke="#64594a" stroke-width="1" opacity="0.8"/><line x1="824.4" y1="525.2" x2="855.3" y2="547.4" stroke="#a39684" stroke-width="1" opacity="0.3"/><line x1="823.4" y1="548.4" x2="854.3" y2="577.7" stroke="#64594a" stroke-width="1" opacity="0.8"/><line x1="824.4" y1="548.4" x2="855.3" y2="577.7" stroke="#a39684" stroke-width="1" opacity="0.3"/><line x1="823.4" y1="578.7" x2="854.3" y2="608" stroke="#64594a" stroke-width="1" opacity="0.8"/><line x1="824.4" y1="578.7" x2="855.3" y2="608" stroke="#a39684" stroke-width="1" opacity="0.3"/><line x1="823.4" y1="609" x2="854.3" y2="639.2" stroke="#64594a" stroke-width="1" opacity="0.8"/><line x1="824.4" y1="609" x2="855.3" y2="639.2" stroke="#a39684" stroke-width="1" opacity="0.3"/><line x1="823.4" y1="658" x2="854.3" y2="640.2" stroke="#64594a" stroke-width="1" opacity="0.8"/><line x1="824.4" y1="658" x2="855.3" y2="640.2" stroke="#a39684" stroke-width="1" opacity="0.3"/><line x1="855.3" y1="525.2" x2="886.4" y2="547.4" stroke="#64594a" stroke-width="1" opacity="0.8"/><line x1="856.3" y1="525.2" x2="887.4" y2="547.4" stroke="#a39684" stroke-width="1" opacity="0.3"/><line x1="855.3" y1="548.4" x2="886.4" y2="577.7" stroke="#64594a" stroke-width="1" opacity="0.8"/><line x1="856.3" y1="548.4" x2="887.4" y2="577.7" stroke="#a39684" stroke-width="1" opacity="0.3"/><line x1="855.3" y1="578.7" x2="886.4" y2="608" stroke="#64594a" stroke-width="1" opacity="0.8"/><line x1="856.3" y1="578.7" x2="887.4" y2="608" stroke="#a39684" stroke-width="1" opacity="0.3"/><line x1="855.3" y1="609" x2="886.4" y2="639.2" stroke="#64594a" stroke-width="1" opacity="0.8"/><line x1="856.3" y1="609" x2="887.4" y2="639.2" stroke="#a39684" stroke-width="1" opacity="0.3"/><line x1="855.3" y1="640.2" x2="886.4" y2="658" stroke="#64594a" stroke-width="1" opacity="0.8"/><line x1="856.3" y1="640.2" x2="887.4" y2="658" stroke="#a39684" stroke-width="1" opacity="0.3"/><line x1="887.4" y1="525.2" x2="918.5" y2="547.4" stroke="#64594a" stroke-width="1" opacity="0.8"/><line x1="888.4" y1="525.2" x2="919.5" y2="547.4" stroke="#a39684" stroke-width="1" opacity="0.3"/><line x1="887.4" y1="548.4" x2="918.5" y2="577.7" stroke="#64594a" stroke-width="1" opacity="0.8"/><line x1="888.4" y1="548.4" x2="919.5" y2="577.7" stroke="#a39684" stroke-width="1" opacity="0.3"/><line x1="887.4" y1="578.7" x2="918.5" y2="608" stroke="#64594a" stroke-width="1" opacity="0.8"/><line x1="888.4" y1="578.7" x2="919.5" y2="608" stroke="#a39684" stroke-width="1" opacity="0.3"/><line x1="887.4" y1="609" x2="918.5" y2="639.2" stroke="#64594a" stroke-width="1" opacity="0.8"/><line x1="888.4" y1="609" x2="919.5" y2="639.2" stroke="#a39684" stroke-width="1" opacity="0.3"/><line x1="887.4" y1="658" x2="918.5" y2="640.2" stroke="#64594a" stroke-width="1" opacity="0.8"/><line x1="888.4" y1="658" x2="919.5" y2="640.2" stroke="#a39684" stroke-width="1" opacity="0.3"/><line x1="919.5" y1="525.2" x2="950.5" y2="547.4" stroke="#64594a" stroke-width="1" opacity="0.8"/><line x1="920.5" y1="525.2" x2="951.5" y2="547.4" stroke="#a39684" stroke-width="1" opacity="0.3"/><line x1="919.5" y1="548.4" x2="950.5" y2="577.7" stroke="#64594a" stroke-width="1" opacity="0.8"/><line x1="920.5" y1="548.4" x2="951.5" y2="577.7" stroke="#a39684" stroke-width="1" opacity="0.3"/><line x1="919.5" y1="578.7" x2="950.5" y2="608" stroke="#64594a" stroke-width="1" opacity="0.8"/><line x1="920.5" y1="578.7" x2="951.5" y2="608" stroke="#a39684" stroke-width="1" opacity="0.3"/><line x1="919.5" y1="609" x2="950.5" y2="639.2" stroke="#64594a" stroke-width="1" opacity="0.8"/><line x1="920.5" y1="609" x2="951.5" y2="639.2" stroke="#a39684" stroke-width="1" opacity="0.3"/><line x1="919.5" y1="658" x2="950.5" y2="640.2" stroke="#64594a" stroke-width="1" opacity="0.8"/><line x1="920.5" y1="658" x2="951.5" y2="640.2" stroke="#a39684" stroke-width="1" opacity="0.3"/><line x1="951.5" y1="525.2" x2="982.6" y2="547.4" stroke="#64594a" stroke-width="1" opacity="0.8"/><line x1="952.5" y1="525.2" x2="983.6" y2="547.4" stroke="#a39684" stroke-width="1" opacity="0.3"/><line x1="951.5" y1="548.4" x2="982.6" y2="577.7" stroke="#64594a" stroke-width="1" opacity="0.8"/><line x1="952.5" y1="548.4" x2="983.6" y2="577.7" stroke="#a39684" stroke-width="1" opacity="0.3"/><line x1="951.5" y1="578.7" x2="982.6" y2="608" stroke="#64594a" stroke-width="1" opacity="0.8"/><line x1="952.5" y1="578.7" x2="983.6" y2="608" stroke="#a39684" stroke-width="1" opacity="0.3"/><line x1="951.5" y1="609" x2="982.6" y2="639.2" stroke="#64594a" stroke-width="1" opacity="0.8"/><line x1="952.5" y1="609" x2="983.6" y2="639.2" stroke="#a39684" stroke-width="1" opacity="0.3"/><line x1="951.5" y1="640.2" x2="982.6" y2="658" stroke="#64594a" stroke-width="1" opacity="0.8"/><line x1="952.5" y1="640.2" x2="983.6" y2="658" stroke="#a39684" stroke-width="1" opacity="0.3"/><line x1="983.6" y1="525.2" x2="1014.7" y2="547.4" stroke="#64594a" stroke-width="1" opacity="0.8"/><line x1="984.6" y1="525.2" x2="1015.7" y2="547.4" stroke="#a39684" stroke-width="1" opacity="0.3"/><line x1="983.6" y1="548.4" x2="1014.7" y2="577.7" stroke="#64594a" stroke-width="1" opacity="0.8"/><line x1="984.6" y1="548.4" x2="1015.7" y2="577.7" stroke="#a39684" stroke-width="1" opacity="0.3"/><line x1="983.6" y1="578.7" x2="1014.7" y2="608" stroke="#64594a" stroke-width="1" opacity="0.8"/><line x1="984.6" y1="578.7" x2="1015.7" y2="608" stroke="#a39684" stroke-width="1" opacity="0.3"/><line x1="983.6" y1="609" x2="1014.7" y2="639.2" stroke="#64594a" stroke-width="1" opacity="0.8"/><line x1="984.6" y1="609" x2="1015.7" y2="639.2" stroke="#a39684" stroke-width="1" opacity="0.3"/><line x1="983.6" y1="658" x2="1014.7" y2="640.2" stroke="#64594a" stroke-width="1" opacity="0.8"/><line x1="984.6" y1="658" x2="1015.7" y2="640.2" stroke="#a39684" stroke-width="1" opacity="0.3"/><line x1="1015.7" y1="525.2" x2="1047.3" y2="547.4" stroke="#64594a" stroke-width="1" opacity="0.8"/><line x1="1016.7" y1="525.2" x2="1048.3" y2="547.4" stroke="#a39684" stroke-width="1" opacity="0.3"/><line x1="1015.7" y1="548.4" x2="1047.3" y2="577.7" stroke="#64594a" stroke-width="1" opacity="0.8"/><line x1="1016.7" y1="548.4" x2="1048.3" y2="577.7" stroke="#a39684" stroke-width="1" opacity="0.3"/><line x1="1015.7" y1="578.7" x2="1047.3" y2="608" stroke="#64594a" stroke-width="1" opacity="0.8"/><line x1="1016.7" y1="578.7" x2="1048.3" y2="608" stroke="#a39684" stroke-width="1" opacity="0.3"/><line x1="1015.7" y1="609" x2="1047.3" y2="639.2" stroke="#64594a" stroke-width="1" opacity="0.8"/><line x1="1016.7" y1="609" x2="1048.3" y2="639.2" stroke="#a39684" stroke-width="1" opacity="0.3"/><line x1="1015.7" y1="658" x2="1047.3" y2="640.2" stroke="#64594a" stroke-width="1" opacity="0.8"/><line x1="1016.7" y1="658" x2="1048.3" y2="640.2" stroke="#a39684" stroke-width="1" opacity="0.3"/><line x1="1048.3" y1="525.2" x2="1079.2" y2="547.4" stroke="#64594a" stroke-width="1" opacity="0.8"/><line x1="1049.3" y1="525.2" x2="1080.2" y2="547.4" stroke="#a39684" stroke-width="1" opacity="0.3"/><line x1="1048.3" y1="548.4" x2="1079.2" y2="577.7" stroke="#64594a" stroke-width="1" opacity="0.8"/><line x1="1049.3" y1="548.4" x2="1080.2" y2="577.7" stroke="#a39684" stroke-width="1" opacity="0.3"/><line x1="1048.3" y1="578.7" x2="1079.2" y2="608" stroke="#64594a" stroke-width="1" opacity="0.8"/><line x1="1049.3" y1="578.7" x2="1080.2" y2="608" stroke="#a39684" stroke-width="1" opacity="0.3"/><line x1="1048.3" y1="609" x2="1079.2" y2="639.2" stroke="#64594a" stroke-width="1" opacity="0.8"/><line x1="1049.3" y1="609" x2="1080.2" y2="639.2" stroke="#a39684" stroke-width="1" opacity="0.3"/><line x1="1048.3" y1="640.2" x2="1079.2" y2="658" stroke="#64594a" stroke-width="1" opacity="0.8"/><line x1="1049.3" y1="640.2" x2="1080.2" y2="658" stroke="#a39684" stroke-width="1" opacity="0.3"/><line x1="1080.2" y1="525.2" x2="1111.6" y2="547.4" stroke="#64594a" stroke-width="1" opacity="0.8"/><line x1="1081.2" y1="525.2" x2="1112.6" y2="547.4" stroke="#a39684" stroke-width="1" opacity="0.3"/><line x1="1080.2" y1="548.4" x2="1111.6" y2="577.7" stroke="#64594a" stroke-width="1" opacity="0.8"/><line x1="1081.2" y1="548.4" x2="1112.6" y2="577.7" stroke="#a39684" stroke-width="1" opacity="0.3"/><line x1="1080.2" y1="578.7" x2="1111.6" y2="608" stroke="#64594a" stroke-width="1" opacity="0.8"/><line x1="1081.2" y1="578.7" x2="1112.6" y2="608" stroke="#a39684" stroke-width="1" opacity="0.3"/><line x1="1080.2" y1="609" x2="1111.6" y2="639.2" stroke="#64594a" stroke-width="1" opacity="0.8"/><line x1="1081.2" y1="609" x2="1112.6" y2="639.2" stroke="#a39684" stroke-width="1" opacity="0.3"/><line x1="1080.2" y1="658" x2="1111.6" y2="640.2" stroke="#64594a" stroke-width="1" opacity="0.8"/><line x1="1081.2" y1="658" x2="1112.6" y2="640.2" stroke="#a39684" stroke-width="1" opacity="0.3"/><line x1="1112.6" y1="525.2" x2="1144.6" y2="547.4" stroke="#64594a" stroke-width="1" opacity="0.8"/><line x1="1113.6" y1="525.2" x2="1145.6" y2="547.4" stroke="#a39684" stroke-width="1" opacity="0.3"/><line x1="1112.6" y1="548.4" x2="1144.6" y2="577.7" stroke="#64594a" stroke-width="1" opacity="0.8"/><line x1="1113.6" y1="548.4" x2="1145.6" y2="577.7" stroke="#a39684" stroke-width="1" opacity="0.3"/><line x1="1112.6" y1="578.7" x2="1144.6" y2="608" stroke="#64594a" stroke-width="1" opacity="0.8"/><line x1="1113.6" y1="578.7" x2="1145.6" y2="608" stroke="#a39684" stroke-width="1" opacity="0.3"/><line x1="1112.6" y1="609" x2="1144.6" y2="639.2" stroke="#64594a" stroke-width="1" opacity="0.8"/><line x1="1113.6" y1="609" x2="1145.6" y2="639.2" stroke="#a39684" stroke-width="1" opacity="0.3"/><line x1="1112.6" y1="658" x2="1144.6" y2="640.2" stroke="#64594a" stroke-width="1" opacity="0.8"/><line x1="1113.6" y1="658" x2="1145.6" y2="640.2" stroke="#a39684" stroke-width="1" opacity="0.3"/><line x1="1145.6" y1="525.2" x2="1176.5" y2="547.4" stroke="#64594a" stroke-width="1" opacity="0.8"/><line x1="1146.6" y1="525.2" x2="1177.5" y2="547.4" stroke="#a39684" stroke-width="1" opacity="0.3"/><line x1="1145.6" y1="548.4" x2="1176.5" y2="577.7" stroke="#64594a" stroke-width="1" opacity="0.8"/><line x1="1146.6" y1="548.4" x2="1177.5" y2="577.7" stroke="#a39684" stroke-width="1" opacity="0.3"/><line x1="1145.6" y1="578.7" x2="1176.5" y2="608" stroke="#64594a" stroke-width="1" opacity="0.8"/><line x1="1146.6" y1="578.7" x2="1177.5" y2="608" stroke="#a39684" stroke-width="1" opacity="0.3"/><line x1="1145.6" y1="609" x2="1176.5" y2="639.2" stroke="#64594a" stroke-width="1" opacity="0.8"/><line x1="1146.6" y1="609" x2="1177.5" y2="639.2" stroke="#a39684" stroke-width="1" opacity="0.3"/><line x1="1145.6" y1="640.2" x2="1176.5" y2="658" stroke="#64594a" stroke-width="1" opacity="0.8"/><line x1="1146.6" y1="640.2" x2="1177.5" y2="658" stroke="#a39684" stroke-width="1" opacity="0.3"/><line x1="720.5" y1="661.5" x2="1176.5" y2="661.5" stroke="#6f6554" stroke-width="1" opacity="0.7"/><line x1="720.5" y1="664.5" x2="1176.5" y2="664.5" stroke="#6f6554" stroke-width="1" opacity="0.5"/><line x1="720.5" y1="668.5" x2="1176.5" y2="668.5" stroke="#5a4f41" stroke-width="1" opacity="0.6"/><line x1="720.5" y1="674.5" x2="1176.5" y2="674.5" stroke="#74695a" stroke-width="1" opacity="0.4"/><line x1="720.5" y1="680.5" x2="1176.5" y2="680.5" stroke="#74695a" stroke-width="1" opacity="0.4"/><line x1="757.5" y1="524.2" x2="757.5" y2="687.3" stroke="#a09484" stroke-width="1" opacity="0.35"/><line x1="754.5" y1="524.2" x2="754.5" y2="687.3" stroke="#5a4f41" stroke-width="1" opacity="0.85"/><line x1="793.5" y1="524.2" x2="793.5" y2="687.3" stroke="#a09484" stroke-width="1" opacity="0.35"/><line x1="790.5" y1="524.2" x2="790.5" y2="687.3" stroke="#5a4f41" stroke-width="1" opacity="0.85"/><line x1="825.5" y1="524.2" x2="825.5" y2="687.3" stroke="#a09484" stroke-width="1" opacity="0.35"/><line x1="822.5" y1="524.2" x2="822.5" y2="687.3" stroke="#5a4f41" stroke-width="1" opacity="0.85"/><line x1="857.5" y1="524.2" x2="857.5" y2="687.3" stroke="#a09484" stroke-width="1" opacity="0.35"/><line x1="854.5" y1="524.2" x2="854.5" y2="687.3" stroke="#5a4f41" stroke-width="1" opacity="0.85"/><line x1="889.5" y1="524.2" x2="889.5" y2="687.3" stroke="#a09484" stroke-width="1" opacity="0.35"/><line x1="886.5" y1="524.2" x2="886.5" y2="687.3" stroke="#5a4f41" stroke-width="1" opacity="0.85"/><line x1="921.5" y1="524.2" x2="921.5" y2="687.3" stroke="#a09484" stroke-width="1" opacity="0.35"/><line x1="918.5" y1="524.2" x2="918.5" y2="687.3" stroke="#5a4f41" stroke-width="1" opacity="0.85"/><line x1="953.5" y1="524.2" x2="953.5" y2="687.3" stroke="#a09484" stroke-width="1" opacity="0.35"/><line x1="950.5" y1="524.2" x2="950.5" y2="687.3" stroke="#5a4f41" stroke-width="1" opacity="0.85"/><line x1="986.5" y1="524.2" x2="986.5" y2="687.3" stroke="#a09484" stroke-width="1" opacity="0.35"/><line x1="983.5" y1="524.2" x2="983.5" y2="687.3" stroke="#5a4f41" stroke-width="1" opacity="0.85"/><line x1="1018.5" y1="524.2" x2="1018.5" y2="687.3" stroke="#a09484" stroke-width="1" opacity="0.35"/><line x1="1015.5" y1="524.2" x2="1015.5" y2="687.3" stroke="#5a4f41" stroke-width="1" opacity="0.85"/><line x1="1050.5" y1="524.2" x2="1050.5" y2="687.3" stroke="#a09484" stroke-width="1" opacity="0.35"/><line x1="1047.5" y1="524.2" x2="1047.5" y2="687.3" stroke="#5a4f41" stroke-width="1" opacity="0.85"/><line x1="1082.5" y1="524.2" x2="1082.5" y2="687.3" stroke="#a09484" stroke-width="1" opacity="0.35"/><line x1="1079.5" y1="524.2" x2="1079.5" y2="687.3" stroke="#5a4f41" stroke-width="1" opacity="0.85"/><line x1="1115.5" y1="524.2" x2="1115.5" y2="687.3" stroke="#a09484" stroke-width="1" opacity="0.35"/><line x1="1112.5" y1="524.2" x2="1112.5" y2="687.3" stroke="#5a4f41" stroke-width="1" opacity="0.85"/><line x1="1148.5" y1="524.2" x2="1148.5" y2="687.3" stroke="#a09484" stroke-width="1" opacity="0.35"/><line x1="1145.5" y1="524.2" x2="1145.5" y2="687.3" stroke="#5a4f41" stroke-width="1" opacity="0.85"/><line x1="720.5" y1="547.5" x2="1176.5" y2="547.5" stroke="#5a4f41" stroke-width="1" opacity="0.85"/><line x1="720.5" y1="578.5" x2="1176.5" y2="578.5" stroke="#5a4f41" stroke-width="1" opacity="0.85"/><line x1="720.5" y1="608.5" x2="1176.5" y2="608.5" stroke="#5a4f41" stroke-width="1" opacity="0.85"/><line x1="720.5" y1="639.5" x2="1176.5" y2="639.5" stroke="#5a4f41" stroke-width="1" opacity="0.85"/><line x1="720.5" y1="658.5" x2="1176.5" y2="658.5" stroke="#5a4f41" stroke-width="1" opacity="0.85"/><rect x="721.0" y="524.7" width="455.0" height="162.0999999999999" fill="none" stroke="#6f6555" stroke-width="1.2"/><rect x="725" y="691" width="449.4000000000001" height="3.6" fill="#7b7160" /><rect x="939" y="708" width="2" height="88" fill="#7a7258" /><rect x="943" y="706.5" width="9" height="1.5" fill="#7a7258" /><rect x="943" y="795.5" width="9" height="1.5" fill="#7a7258" /><rect x="943.6" y="711" width="230.4" height="82.1" fill="#8b7f6e" /><rect x="943.6" y="711" width="230.4" height="8.5" fill="#7c7262" /><rect x="943.6" y="784.2" width="230.4" height="8.9" fill="#7c7262" /><rect x="1172" y="709" width="5" height="4" fill="#7a7258" /><rect x="1172" y="790" width="5" height="4" fill="#7a7258" /><line x1="943.6" y1="749.3" x2="1174" y2="749.3" stroke="#5f5546" stroke-width="1" opacity="0.9"/><line x1="943.6" y1="753.5" x2="1174" y2="753.5" stroke="#5f5546" stroke-width="1" opacity="0.8"/><line x1="972.4" y1="711" x2="972.4" y2="793" stroke="#5f5546" stroke-width="1" opacity="0.7"/><line x1="989.6" y1="711" x2="989.6" y2="793" stroke="#5f5546" stroke-width="1" opacity="0.7"/><line x1="1008.5" y1="711" x2="1008.5" y2="793" stroke="#5f5546" stroke-width="1" opacity="0.7"/><line x1="1026.2" y1="711" x2="1026.2" y2="793" stroke="#5f5546" stroke-width="1" opacity="0.7"/><line x1="1044.5" y1="711" x2="1044.5" y2="793" stroke="#5f5546" stroke-width="1" opacity="0.7"/><line x1="1063" y1="711" x2="1063" y2="793" stroke="#5f5546" stroke-width="1" opacity="0.7"/><line x1="1093.4" y1="711" x2="1093.4" y2="793" stroke="#5f5546" stroke-width="1" opacity="0.7"/><line x1="1109.6" y1="711" x2="1109.6" y2="793" stroke="#5f5546" stroke-width="1" opacity="0.7"/><line x1="1127.4" y1="711" x2="1127.4" y2="793" stroke="#5f5546" stroke-width="1" opacity="0.7"/><line x1="1147.3" y1="711" x2="1147.3" y2="793" stroke="#5f5546" stroke-width="1" opacity="0.7"/><line x1="943.6" y1="749" x2="972.4" y2="720" stroke="#6a5f50" stroke-width="1" opacity="0.6"/><line x1="943.6" y1="754" x2="972.4" y2="784" stroke="#6a5f50" stroke-width="1" opacity="0.6"/><line x1="972.4" y1="749" x2="989.6" y2="720" stroke="#6a5f50" stroke-width="1" opacity="0.6"/><line x1="972.4" y1="754" x2="989.6" y2="784" stroke="#6a5f50" stroke-width="1" opacity="0.6"/><line x1="989.6" y1="749" x2="1008.5" y2="720" stroke="#6a5f50" stroke-width="1" opacity="0.6"/><line x1="989.6" y1="754" x2="1008.5" y2="784" stroke="#6a5f50" stroke-width="1" opacity="0.6"/><line x1="1008.5" y1="749" x2="1026.2" y2="720" stroke="#6a5f50" stroke-width="1" opacity="0.6"/><line x1="1008.5" y1="754" x2="1026.2" y2="784" stroke="#6a5f50" stroke-width="1" opacity="0.6"/><line x1="1026.2" y1="749" x2="1044.5" y2="720" stroke="#6a5f50" stroke-width="1" opacity="0.6"/><line x1="1026.2" y1="754" x2="1044.5" y2="784" stroke="#6a5f50" stroke-width="1" opacity="0.6"/><line x1="1044.5" y1="749" x2="1063" y2="720" stroke="#6a5f50" stroke-width="1" opacity="0.6"/><line x1="1044.5" y1="754" x2="1063" y2="784" stroke="#6a5f50" stroke-width="1" opacity="0.6"/><line x1="1063" y1="749" x2="1093.4" y2="720" stroke="#6a5f50" stroke-width="1" opacity="0.6"/><line x1="1063" y1="754" x2="1093.4" y2="784" stroke="#6a5f50" stroke-width="1" opacity="0.6"/><line x1="1093.4" y1="749" x2="1109.6" y2="720" stroke="#6a5f50" stroke-width="1" opacity="0.6"/><line x1="1093.4" y1="754" x2="1109.6" y2="784" stroke="#6a5f50" stroke-width="1" opacity="0.6"/><line x1="1109.6" y1="749" x2="1127.4" y2="720" stroke="#6a5f50" stroke-width="1" opacity="0.6"/><line x1="1109.6" y1="754" x2="1127.4" y2="784" stroke="#6a5f50" stroke-width="1" opacity="0.6"/><line x1="1127.4" y1="749" x2="1147.3" y2="720" stroke="#6a5f50" stroke-width="1" opacity="0.6"/><line x1="1127.4" y1="754" x2="1147.3" y2="784" stroke="#6a5f50" stroke-width="1" opacity="0.6"/><line x1="1147.3" y1="749" x2="1174" y2="720" stroke="#6a5f50" stroke-width="1" opacity="0.6"/><line x1="1147.3" y1="754" x2="1174" y2="784" stroke="#6a5f50" stroke-width="1" opacity="0.6"/><line x1="944" y1="712" x2="952" y2="719" stroke="#9a8e7e" stroke-width="1" opacity="0.4"/><line x1="944" y1="785" x2="952" y2="792" stroke="#9a8e7e" stroke-width="1" opacity="0.4"/><line x1="954" y1="712" x2="962" y2="719" stroke="#9a8e7e" stroke-width="1" opacity="0.4"/><line x1="954" y1="785" x2="962" y2="792" stroke="#9a8e7e" stroke-width="1" opacity="0.4"/><line x1="964" y1="712" x2="972" y2="719" stroke="#9a8e7e" stroke-width="1" opacity="0.4"/><line x1="964" y1="785" x2="972" y2="792" stroke="#9a8e7e" stroke-width="1" opacity="0.4"/><line x1="974" y1="712" x2="982" y2="719" stroke="#9a8e7e" stroke-width="1" opacity="0.4"/><line x1="974" y1="785" x2="982" y2="792" stroke="#9a8e7e" stroke-width="1" opacity="0.4"/><line x1="984" y1="712" x2="992" y2="719" stroke="#9a8e7e" stroke-width="1" opacity="0.4"/><line x1="984" y1="785" x2="992" y2="792" stroke="#9a8e7e" stroke-width="1" opacity="0.4"/><line x1="994" y1="712" x2="1002" y2="719" stroke="#9a8e7e" stroke-width="1" opacity="0.4"/><line x1="994" y1="785" x2="1002" y2="792" stroke="#9a8e7e" stroke-width="1" opacity="0.4"/><line x1="1004" y1="712" x2="1012" y2="719" stroke="#9a8e7e" stroke-width="1" opacity="0.4"/><line x1="1004" y1="785" x2="1012" y2="792" stroke="#9a8e7e" stroke-width="1" opacity="0.4"/><line x1="1014" y1="712" x2="1022" y2="719" stroke="#9a8e7e" stroke-width="1" opacity="0.4"/><line x1="1014" y1="785" x2="1022" y2="792" stroke="#9a8e7e" stroke-width="1" opacity="0.4"/><line x1="1024" y1="712" x2="1032" y2="719" stroke="#9a8e7e" stroke-width="1" opacity="0.4"/><line x1="1024" y1="785" x2="1032" y2="792" stroke="#9a8e7e" stroke-width="1" opacity="0.4"/><line x1="1034" y1="712" x2="1042" y2="719" stroke="#9a8e7e" stroke-width="1" opacity="0.4"/><line x1="1034" y1="785" x2="1042" y2="792" stroke="#9a8e7e" stroke-width="1" opacity="0.4"/><line x1="1044" y1="712" x2="1052" y2="719" stroke="#9a8e7e" stroke-width="1" opacity="0.4"/><line x1="1044" y1="785" x2="1052" y2="792" stroke="#9a8e7e" stroke-width="1" opacity="0.4"/><line x1="1054" y1="712" x2="1062" y2="719" stroke="#9a8e7e" stroke-width="1" opacity="0.4"/><line x1="1054" y1="785" x2="1062" y2="792" stroke="#9a8e7e" stroke-width="1" opacity="0.4"/><line x1="1064" y1="712" x2="1072" y2="719" stroke="#9a8e7e" stroke-width="1" opacity="0.4"/><line x1="1064" y1="785" x2="1072" y2="792" stroke="#9a8e7e" stroke-width="1" opacity="0.4"/><line x1="1074" y1="712" x2="1082" y2="719" stroke="#9a8e7e" stroke-width="1" opacity="0.4"/><line x1="1074" y1="785" x2="1082" y2="792" stroke="#9a8e7e" stroke-width="1" opacity="0.4"/><line x1="1084" y1="712" x2="1092" y2="719" stroke="#9a8e7e" stroke-width="1" opacity="0.4"/><line x1="1084" y1="785" x2="1092" y2="792" stroke="#9a8e7e" stroke-width="1" opacity="0.4"/><line x1="1094" y1="712" x2="1102" y2="719" stroke="#9a8e7e" stroke-width="1" opacity="0.4"/><line x1="1094" y1="785" x2="1102" y2="792" stroke="#9a8e7e" stroke-width="1" opacity="0.4"/><line x1="1104" y1="712" x2="1112" y2="719" stroke="#9a8e7e" stroke-width="1" opacity="0.4"/><line x1="1104" y1="785" x2="1112" y2="792" stroke="#9a8e7e" stroke-width="1" opacity="0.4"/><line x1="1114" y1="712" x2="1122" y2="719" stroke="#9a8e7e" stroke-width="1" opacity="0.4"/><line x1="1114" y1="785" x2="1122" y2="792" stroke="#9a8e7e" stroke-width="1" opacity="0.4"/><line x1="1124" y1="712" x2="1132" y2="719" stroke="#9a8e7e" stroke-width="1" opacity="0.4"/><line x1="1124" y1="785" x2="1132" y2="792" stroke="#9a8e7e" stroke-width="1" opacity="0.4"/><line x1="1134" y1="712" x2="1142" y2="719" stroke="#9a8e7e" stroke-width="1" opacity="0.4"/><line x1="1134" y1="785" x2="1142" y2="792" stroke="#9a8e7e" stroke-width="1" opacity="0.4"/><line x1="1144" y1="712" x2="1152" y2="719" stroke="#9a8e7e" stroke-width="1" opacity="0.4"/><line x1="1144" y1="785" x2="1152" y2="792" stroke="#9a8e7e" stroke-width="1" opacity="0.4"/><line x1="1154" y1="712" x2="1162" y2="719" stroke="#9a8e7e" stroke-width="1" opacity="0.4"/><line x1="1154" y1="785" x2="1162" y2="792" stroke="#9a8e7e" stroke-width="1" opacity="0.4"/><line x1="1164" y1="712" x2="1172" y2="719" stroke="#9a8e7e" stroke-width="1" opacity="0.4"/><line x1="1164" y1="785" x2="1172" y2="792" stroke="#9a8e7e" stroke-width="1" opacity="0.4"/><rect x="865.6" y="759.3" width="7" height="5" fill="#7a705d" /><rect x="860.4" y="764.2" width="16.5" height="22.2" fill="#857a69" /><line x1="866.4" y1="765" x2="866.4" y2="786" stroke="#6f6556" stroke-width="1" opacity="0.8"/><line x1="871.4" y1="765" x2="871.4" y2="786" stroke="#6f6556" stroke-width="1" opacity="0.8"/><rect x="860.4" y="764.2" width="16.5" height="3" fill="#746a58" /><rect x="860.4" y="783" width="16.5" height="3.4" fill="#746a58" /><rect x="867" y="787" width="5" height="4" fill="#6f6655" /><rect x="864" y="791.5" width="10" height="3.7" fill="#6f6655" rx="1.5"/><rect x="900" y="759.3" width="7" height="5" fill="#7a705d" /><rect x="896" y="764.2" width="16.5" height="22.2" fill="#857a69" /><line x1="902" y1="765" x2="902" y2="786" stroke="#6f6556" stroke-width="1" opacity="0.8"/><line x1="907" y1="765" x2="907" y2="786" stroke="#6f6556" stroke-width="1" opacity="0.8"/><rect x="896" y="764.2" width="16.5" height="3" fill="#746a58" /><rect x="896" y="783" width="16.5" height="3.4" fill="#746a58" /><rect x="901.7" y="787" width="5" height="4" fill="#6f6655" /><rect x="898.7" y="791.5" width="10" height="3.7" fill="#6f6655" rx="1.5"/></svg>
<div class="a" style="left:1336px;top:58px;width:1px;height:946px;background:#404040;"></div>
<div class="a" style="left:1337px;top:71px;width:2px;height:933px;background:#4a4a4a;"></div>
<div class="a" style="left:1376px;top:71px;width:1px;height:933px;background:#363636;"></div>
<div class="a" style="left:1377px;top:71px;width:2px;height:933px;background:#424242;"></div>
<div class="a" style="left:1338px;top:110px;width:38px;height:2px;background:#474747;"></div>
<div class="a" style="left:1338px;top:179px;width:38px;height:2px;background:#474747;"></div>
<div class="a" style="left:1338px;top:249px;width:38px;height:2px;background:#474747;"></div>
<svg style="left:1348px;top:83px;" width="20" height="18" viewBox="0 0 20 18"><rect x="1.5" y="1.5" width="5" height="4" fill="none" stroke="#d8d8d8" stroke-width="1.5"/><rect x="1.5" y="7.5" width="5" height="4" fill="none" stroke="#d8d8d8" stroke-width="1.5"/><rect x="1" y="13" width="6" height="4.5" fill="#d8d8d8"/><path d="M11 3.5C15.5 3.5 16.5 9 14.5 12.5C13.5 14.5 11.5 15.5 10 15.5" fill="none" stroke="#d8d8d8" stroke-width="2.2"/><path d="M8.5 0.5L12.5 3.5L9.5 7" fill="none" stroke="#d8d8d8" stroke-width="2"/></svg>
<svg style="left:1347px;top:122px;" width="22" height="20" viewBox="0 0 22 20"><path d="M1 2H5M1 5H6M1 8H7M1 11H6" stroke="#d8d8d8" stroke-width="1.2"/><path d="M20 1L11 12" stroke="#d8d8d8" stroke-width="2.4"/><path d="M10 12C7 12 6 15 5 18C9 18 12 16 12 14Z" fill="#d8d8d8"/></svg>
<svg style="left:1347px;top:152px;" width="22" height="18" viewBox="0 0 22 18"><path d="M1 5H20M1 13H20" stroke="#d8d8d8" stroke-width="1.6"/><circle cx="7" cy="5" r="3" fill="#d8d8d8"/><circle cx="16" cy="13" r="3" fill="#d8d8d8"/></svg>
<div class="t" style="left:1349px;top:195px;font-size:17px;color:#d8d8d8;">A</div>
<div class="a" style="left:1364px;top:193px;width:1.5px;height:20px;background:#d8d8d8;"></div>
<div class="t" style="left:1352px;top:223px;font-size:16px;color:#d8d8d8;font-weight:bold;">&#182;</div>
<div class="a" style="left:1377px;top:71px;width:303px;height:2px;background:#474747;"></div>
<div class="a" style="left:1377px;top:73px;width:303px;height:25px;background:#4a4a4a;"></div>
<div class="a" style="left:1379px;top:71px;width:33px;height:27px;background:#535353;"></div>
<div class="a" style="left:1473px;top:74px;width:1px;height:22px;background:#424242;"></div>
<div class="a" style="left:1535px;top:74px;width:1px;height:22px;background:#424242;"></div>
<div class="a" style="left:1590px;top:74px;width:1px;height:22px;background:#424242;"></div>
<div class="t" style="left:1388px;top:79px;font-size:10px;color:#f0f0f0;font-weight:bold;">Cor</div>
<div class="t" style="left:1422px;top:79px;font-size:10px;color:#bdbdbd;">Amostras</div>
<div class="t" style="left:1483px;top:79px;font-size:10px;color:#bdbdbd;">Degradês</div>
<div class="t" style="left:1544px;top:79px;font-size:10px;color:#bdbdbd;">Padrões</div>
<div class="a" style="left:1663px;top:82px;width:11px;height:1px;background:#cfcfcf;"></div>
<div class="a" style="left:1663px;top:84px;width:11px;height:1px;background:#cfcfcf;"></div>
<div class="a" style="left:1663px;top:86px;width:11px;height:1px;background:#cfcfcf;"></div>
<div class="a" style="left:1663px;top:88px;width:11px;height:1px;background:#cfcfcf;"></div>
<div class="a" style="left:1398px;top:119px;width:20px;height:20px;background:#f5c518;border:1px solid #fff3c8;box-shadow:0 0 0 1px #3a3a3a"></div>
<div class="a" style="left:1389px;top:110px;width:19px;height:19px;background:#e8650a;border:1px solid #ffeacc;box-shadow:0 0 0 1px #3a3a3a"></div>
<svg style="left:1424px;top:106px;" width="203" height="91" viewBox="0 0 203 91"><defs><linearGradient id="h1" x1="0" x2="1" y1="0" y2="0"><stop offset="0" stop-color="#fff8e6"/><stop offset="1" stop-color="#f7b800"/></linearGradient><linearGradient id="v1" x1="0" x2="0" y1="0" y2="1"><stop offset="0" stop-color="#000" stop-opacity="0"/><stop offset="0.3" stop-color="#000" stop-opacity="0.2"/><stop offset="0.6" stop-color="#000" stop-opacity="0.55"/><stop offset="0.85" stop-color="#000" stop-opacity="0.85"/><stop offset="1" stop-color="#000" stop-opacity="1"/></linearGradient></defs><rect width="203" height="91" fill="url(#h1)"/><rect width="203" height="91" fill="url(#v1)"/><circle cx="200" cy="2" r="3" fill="none" stroke="#333" stroke-width="1"/></svg>
<svg style="left:1644px;top:105px;" width="20" height="93" viewBox="0 0 20 93"><defs><linearGradient id="hu" x1="0" x2="0" y1="0" y2="1"><stop offset="0" stop-color="#ff0030"/><stop offset="0.17" stop-color="#ff00ff"/><stop offset="0.33" stop-color="#2000ff"/><stop offset="0.5" stop-color="#00ffff"/><stop offset="0.67" stop-color="#30ff00"/><stop offset="0.83" stop-color="#ffff00"/><stop offset="1" stop-color="#ff1000"/></linearGradient></defs><rect width="20" height="93" fill="url(#hu)"/></svg>
<svg style="left:1634px;top:180px;" width="7" height="10" viewBox="0 0 7 10"><path d="M0.5 0.5L6.5 5L0.5 9.5Z" fill="#f0f0f0"/></svg>
<div class="a" style="left:1377px;top:217px;width:303px;height:2px;background:#424242;"></div>
<div class="a" style="left:1377px;top:219px;width:303px;height:30px;background:#4a4a4a;"></div>
<div class="a" style="left:1377px;top:219px;width:6px;height:30px;background:#515151;"></div>
<div class="a" style="left:1383px;top:219px;width:73px;height:30px;background:#535353;"></div>
<div class="a" style="left:1506px;top:222px;width:1px;height:22px;background:#424242;"></div>
<div class="a" style="left:1579px;top:222px;width:1px;height:22px;background:#424242;"></div>
<div class="t" style="left:1388px;top:230px;font-size:10px;color:#f0f0f0;font-weight:bold;">Propriedades</div>
<div class="t" style="left:1467px;top:230px;font-size:10px;color:#bdbdbd;">Ajustes</div>
<div class="t" style="left:1520px;top:230px;font-size:10px;color:#bdbdbd;">Bibliotecas</div>
<div class="a" style="left:1663px;top:232px;width:11px;height:1px;background:#cfcfcf;"></div>
<div class="a" style="left:1663px;top:234px;width:11px;height:1px;background:#cfcfcf;"></div>
<div class="a" style="left:1663px;top:236px;width:11px;height:1px;background:#cfcfcf;"></div>
<div class="a" style="left:1663px;top:238px;width:11px;height:1px;background:#cfcfcf;"></div>
<div class="a" style="left:1383px;top:281px;width:281px;height:1px;background:#474747;"></div>
<div class="a" style="left:1391px;top:256px;width:21px;height:20px;background:#393939;"></div>
<svg style="left:1395px;top:260px;" width="13" height="12" viewBox="0 0 13 12"><rect x="0.5" y="0.5" width="12" height="11" fill="none" stroke="#e8e8e8" stroke-width="1"/><path d="M1 11L4 5L6 8L8 4L12 11Z" fill="#e8e8e8"/></svg>
<div class="t" style="left:1418px;top:264px;font-size:10px;color:#dcdcdc;">Camada de pixels</div>
<div class="a" style="left:1383px;top:286px;width:281px;height:107px;background:transparent;border:1px solid #4f4f4f"></div>
<svg style="left:1386px;top:295px;" width="9" height="6" viewBox="0 0 9 6"><path d="M0.5 0.5L4.5 4.5L8.5 0.5" fill="none" stroke="#c8c8c8" stroke-width="1.2"/></svg>
<div class="t" style="left:1403px;top:294px;font-size:10px;color:#f0f0f0;font-weight:bold;">Transformar</div>
<div class="a" style="left:1388px;top:321px;width:23px;height:24px;background:#3a3a3a;"></div>
<svg style="left:1395px;top:326px;" width="9" height="14" viewBox="0 0 9 14"><rect x="1" y="1" width="7" height="5" rx="2.5" fill="none" stroke="#e0e0e0" stroke-width="1.3"/><rect x="1" y="8" width="7" height="5" rx="2.5" fill="none" stroke="#e0e0e0" stroke-width="1.3"/><path d="M4.5 4V10" stroke="#e0e0e0" stroke-width="1.3"/></svg>
<div class="t" style="left:1425px;top:320px;font-size:10px;color:#cfcfcf;">L:</div>
<div class="a" style="left:1436px;top:313px;width:51px;height:16px;background:#464646;border:1px solid #3e3e3e"></div>
<div class="t" style="left:1440px;top:317px;font-size:10px;color:#e6e6e6;">4096 px</div>
<div class="t" style="left:1425px;top:344px;font-size:10px;color:#cfcfcf;">A</div>
<div class="a" style="left:1436px;top:338px;width:51px;height:16px;background:#464646;border:1px solid #3e3e3e"></div>
<div class="t" style="left:1440px;top:342px;font-size:10px;color:#e6e6e6;">2048 px</div>
<div class="t" style="left:1529px;top:319px;font-size:10px;color:#cfcfcf;">X</div>
<div class="a" style="left:1543px;top:313px;width:49px;height:16px;background:#464646;border:1px solid #3e3e3e"></div>
<div class="t" style="left:1547px;top:317px;font-size:10px;color:#e6e6e6;">0 px</div>
<div class="t" style="left:1529px;top:344px;font-size:10px;color:#cfcfcf;">Y</div>
<div class="a" style="left:1543px;top:338px;width:49px;height:16px;background:#464646;border:1px solid #3e3e3e"></div>
<div class="t" style="left:1547px;top:342px;font-size:10px;color:#e6e6e6;">0 px</div>
<svg style="left:1419px;top:368px;" width="15" height="13" viewBox="0 0 15 13"><path d="M1 12H14M1 12L11 1" fill="none" stroke="#d8d8d8" stroke-width="1.3"/><path d="M7 12A6 6 0 0 0 5 7" fill="none" stroke="#d8d8d8" stroke-width="1"/></svg>
<div class="a" style="left:1439px;top:368px;width:36px;height:15px;background:#464646;border:1px solid #3e3e3e"></div>
<div class="t" style="left:1443px;top:372px;font-size:10px;color:#e6e6e6;">0,00°</div>
<div class="a" style="left:1477px;top:368px;width:12px;height:15px;background:#464646;border:1px solid #3e3e3e"></div>
<svg style="left:1480px;top:374px;" width="7" height="4" viewBox="0 0 7 4"><path d="M0.5 0.5L3.5 3.5L6.5 0.5" fill="none" stroke="#c8c8c8" stroke-width="1.1"/></svg>
<svg style="left:1545px;top:368px;" width="17" height="14" viewBox="0 0 17 14"><path d="M1 1V13L6 7Z" fill="none" stroke="#d8d8d8" stroke-width="1.1"/><path d="M8.5 0V14" stroke="#d8d8d8" stroke-width="1"/><path d="M16 1V13L11 7Z" fill="#d8d8d8"/></svg>
<svg style="left:1574px;top:368px;" width="14" height="14" viewBox="0 0 14 14"><path d="M1 1H13L7 6Z" fill="none" stroke="#d8d8d8" stroke-width="1.1"/><path d="M0 7.5H14" stroke="#d8d8d8" stroke-width="1"/><path d="M1 13H13L7 8.5Z" fill="#d8d8d8"/></svg>
<div class="a" style="left:1383px;top:398px;width:281px;height:1px;background:#474747;"></div>
<svg style="left:1386px;top:412px;" width="9" height="6" viewBox="0 0 9 6"><path d="M0.5 0.5L4.5 4.5L8.5 0.5" fill="none" stroke="#c8c8c8" stroke-width="1.2"/></svg>
<div class="t" style="left:1404px;top:410px;font-size:10px;color:#f0f0f0;font-weight:bold;">Alinhar e distribuir</div>
<div class="t" style="left:1388px;top:433px;font-size:10px;color:#d0d0d0;">Alinhar:</div>
<svg style="left:1393px;top:456px;" width="15" height="16" viewBox="0 0 15 16"><rect x="0" y="0" width="1" height="16" fill="#c4c4c4"/><rect x="3" y="4" width="7" height="3" fill="#c4c4c4"/><rect x="3" y="9" width="11" height="3" fill="#c4c4c4"/></svg>
<svg style="left:1423px;top:456px;" width="13" height="16" viewBox="0 0 13 16"><rect x="6" y="0" width="1" height="16" fill="#c4c4c4"/><rect x="3" y="4" width="7" height="3" fill="#c4c4c4"/><rect x="1" y="9" width="11" height="3" fill="#c4c4c4"/></svg>
<svg style="left:1450px;top:456px;" width="15" height="16" viewBox="0 0 15 16"><rect x="14" y="0" width="1" height="16" fill="#c4c4c4"/><rect x="5" y="4" width="7" height="3" fill="#c4c4c4"/><rect x="1" y="9" width="11" height="3" fill="#c4c4c4"/></svg>
<svg style="left:1496px;top:456px;" width="16" height="16" viewBox="0 0 16 16"><rect x="0" y="1" width="16" height="1" fill="#c4c4c4"/><rect x="3" y="3" width="3" height="12" fill="#c4c4c4"/><rect x="9" y="3" width="3" height="7" fill="#c4c4c4"/></svg>
<svg style="left:1525px;top:456px;" width="18" height="16" viewBox="0 0 18 16"><rect x="0" y="7" width="18" height="1" fill="#c4c4c4"/><rect x="4" y="1" width="3" height="13" fill="#c4c4c4"/><rect x="10" y="3" width="3" height="9" fill="#c4c4c4"/></svg>
<svg style="left:1552px;top:456px;" width="16" height="16" viewBox="0 0 16 16"><rect x="0" y="14" width="16" height="1" fill="#c4c4c4"/><rect x="3" y="1" width="3" height="12" fill="#c4c4c4"/><rect x="9" y="5" width="3" height="8" fill="#c4c4c4"/></svg>
<div class="a" style="left:1577px;top:493px;width:3px;height:3px;background:#e0e0e0;border-radius:1.5px"></div>
<div class="a" style="left:1582px;top:493px;width:3px;height:3px;background:#e0e0e0;border-radius:1.5px"></div>
<div class="a" style="left:1587px;top:493px;width:3px;height:3px;background:#e0e0e0;border-radius:1.5px"></div>
<div class="a" style="left:1383px;top:506px;width:281px;height:1px;background:#474747;"></div>
<svg style="left:1386px;top:521px;" width="9" height="6" viewBox="0 0 9 6"><path d="M0.5 0.5L4.5 4.5L8.5 0.5" fill="none" stroke="#c8c8c8" stroke-width="1.2"/></svg>
<div class="t" style="left:1403px;top:519px;font-size:10px;color:#f0f0f0;font-weight:bold;">Ações rápidas</div>
<div class="a" style="left:1665px;top:286px;width:14px;height:274px;background:#4a4a4a;"></div>
<div class="a" style="left:1666px;top:300px;width:11px;height:205px;background:#6a6a6a;"></div>
<svg style="left:1667px;top:289px;" width="9" height="6" viewBox="0 0 9 6"><path d="M0.5 5L4.5 1L8.5 5" fill="none" stroke="#bdbdbd" stroke-width="1.1"/></svg>
<div class="a" style="left:1668px;top:551px;width:7px;height:1px;background:#9a9a9a;"></div>
<div class="a" style="left:1377px;top:585px;width:303px;height:2px;background:#424242;"></div>
<div class="a" style="left:1377px;top:587px;width:303px;height:30px;background:#4a4a4a;"></div>
<div class="a" style="left:1377px;top:587px;width:6px;height:30px;background:#515151;"></div>
<div class="a" style="left:1383px;top:587px;width:55px;height:30px;background:#535353;"></div>
<div class="a" style="left:1483px;top:590px;width:1px;height:22px;background:#424242;"></div>
<div class="a" style="left:1570px;top:590px;width:1px;height:22px;background:#424242;"></div>
<div class="t" style="left:1388px;top:598px;font-size:10px;color:#f0f0f0;font-weight:bold;">Camadas</div>
<div class="t" style="left:1448px;top:598px;font-size:10px;color:#bdbdbd;">Canais</div>
<div class="t" style="left:1495px;top:598px;font-size:10px;color:#bdbdbd;">Demarcadores</div>
<div class="a" style="left:1663px;top:600px;width:11px;height:1px;background:#cfcfcf;"></div>
<div class="a" style="left:1663px;top:602px;width:11px;height:1px;background:#cfcfcf;"></div>
<div class="a" style="left:1663px;top:604px;width:11px;height:1px;background:#cfcfcf;"></div>
<div class="a" style="left:1663px;top:606px;width:11px;height:1px;background:#cfcfcf;"></div>
<div class="a" style="left:1384px;top:625px;width:105px;height:22px;background:#454545;border:1px solid #3d3d3d"></div>
<svg style="left:1390px;top:630px;" width="13" height="13" viewBox="0 0 13 13"><circle cx="5" cy="5" r="3.8" fill="none" stroke="#e8e8e8" stroke-width="1.6"/><path d="M7.8 7.8L12 12" stroke="#e8e8e8" stroke-width="2"/></svg>
<div class="t" style="left:1405px;top:632px;font-size:10px;color:#e8e8e8;">Tipo</div>
<svg style="left:1480px;top:634px;" width="8" height="5" viewBox="0 0 8 5"><path d="M0.5 0.5L4 4L7.5 0.5" fill="none" stroke="#c0c0c0" stroke-width="1.2"/></svg>
<svg style="left:1523px;top:628px;" width="14" height="13" viewBox="0 0 14 13"><rect x="0.7" y="0.7" width="12.6" height="11.6" fill="none" stroke="#dcdcdc" stroke-width="1.2"/><path d="M3 10L5 6L7 8L9 5L11 10Z" fill="#dcdcdc"/></svg>
<svg style="left:1548px;top:628px;" width="13" height="13" viewBox="0 0 13 13"><circle cx="6.5" cy="6.5" r="5.8" fill="#dcdcdc"/><path d="M2.5 10.5L10.5 2.5A5.8 5.8 0 0 1 10.5 10.5Z" fill="#535353"/></svg>
<svg style="left:1573px;top:628px;" width="12" height="13" viewBox="0 0 12 13"><path d="M0.5 0.5H11.5V3.5H10.5L10 2H7V11H8.5V12.5H3.5V11H5V2H2L1.5 3.5H0.5Z" fill="#dcdcdc"/></svg>
<svg style="left:1594px;top:628px;" width="14" height="14" viewBox="0 0 14 14"><rect x="2.5" y="2.5" width="9" height="9" fill="none" stroke="#dcdcdc" stroke-width="1.2"/><rect x="0.5" y="0.5" width="3" height="3" fill="#dcdcdc"/><rect x="10.5" y="0.5" width="3" height="3" fill="#dcdcdc"/><rect x="0.5" y="10.5" width="3" height="3" fill="#dcdcdc"/><rect x="10.5" y="10.5" width="3" height="3" fill="#dcdcdc"/></svg>
<svg style="left:1621px;top:628px;" width="12" height="15" viewBox="0 0 12 15"><path d="M3 1H8L11 4V14H1V7" fill="none" stroke="#dcdcdc" stroke-width="1.2"/><rect x="0" y="8" width="6" height="6" fill="#dcdcdc"/></svg>
<svg style="left:1662px;top:623px;" width="11" height="20" viewBox="0 0 11 20"><circle cx="5.5" cy="5.5" r="4.5" fill="#d8d8d8"/><rect x="3" y="10" width="5" height="8" rx="2.5" fill="#3c3c3c"/></svg>
<div class="a" style="left:1383px;top:650px;width:281px;height:1px;background:#474747;"></div>
<div class="a" style="left:1384px;top:655px;width:177px;height:18px;background:#454545;border:1px solid #3d3d3d"></div>
<div class="t" style="left:1391px;top:660px;font-size:10px;color:#e8e8e8;">Normal</div>
<svg style="left:1552px;top:663px;" width="8" height="5" viewBox="0 0 8 5"><path d="M0.5 0.5L4 4L7.5 0.5" fill="none" stroke="#c0c0c0" stroke-width="1.2"/></svg>
<div class="t" style="left:1569px;top:659px;font-size:10px;color:#cfcfcf;">Opacidade:</div>
<div class="a" style="left:1624px;top:655px;width:34px;height:18px;background:#464646;border:1px solid #3d3d3d"></div>
<div class="t" style="left:1629px;top:660px;font-size:10px;color:#e8e8e8;">100%</div>
<div class="a" style="left:1662px;top:655px;width:11px;height:18px;background:#4a4a4a;border:1px solid #3d3d3d"></div>
<svg style="left:1664px;top:662px;" width="7" height="4" viewBox="0 0 7 4"><path d="M0.5 0.5L3.5 3.5L6.5 0.5" fill="none" stroke="#c0c0c0" stroke-width="1.1"/></svg>
<div class="a" style="left:1383px;top:677px;width:281px;height:1px;background:#474747;"></div>
<div class="t" style="left:1385px;top:687px;font-size:10px;color:#cfcfcf;">Bloq.:</div>
<svg style="left:1419px;top:684px;" width="12" height="12" viewBox="0 0 12 12"><rect x="0.5" y="0.5" width="11" height="11" fill="none" stroke="#dcdcdc" stroke-width="1"/><rect x="1" y="1" width="3.3" height="3.3" fill="#dcdcdc"/><rect x="7.6" y="1" width="3.3" height="3.3" fill="#dcdcdc"/><rect x="4.3" y="4.3" width="3.3" height="3.3" fill="#dcdcdc"/><rect x="1" y="7.6" width="3.3" height="3.3" fill="#dcdcdc"/><rect x="7.6" y="7.6" width="3.3" height="3.3" fill="#dcdcdc"/></svg>
<svg style="left:1441px;top:683px;" width="14" height="14" viewBox="0 0 14 14"><path d="M13 1L6 8" stroke="#dcdcdc" stroke-width="2"/><path d="M5 8C3 8 2 11 1 13C4 13 6 12 6.5 10Z" fill="#dcdcdc"/></svg>
<svg style="left:1463px;top:683px;" width="14" height="14" viewBox="0 0 14 14"><path d="M7 0.5L9 3H8V6H11V5L13.5 7L11 9V8H8V11H9L7 13.5L5 11H6V8H3V9L0.5 7L3 5V6H6V3H5Z" fill="#dcdcdc"/></svg>
<svg style="left:1485px;top:683px;" width="15" height="14" viewBox="0 0 15 14"><path d="M3 1V11H14M1 3H12V13" fill="none" stroke="#dcdcdc" stroke-width="1.2"/></svg>
<svg style="left:1508px;top:683px;" width="11" height="14" viewBox="0 0 11 14"><path d="M3 6V4A2.5 2.5 0 0 1 8 4V6" fill="none" stroke="#dcdcdc" stroke-width="1.5"/><rect x="1" y="6" width="9" height="7" fill="#dcdcdc"/></svg>
<div class="t" style="left:1587px;top:687px;font-size:10px;color:#cfcfcf;">Preen.:</div>
<div class="a" style="left:1624px;top:680px;width:34px;height:18px;background:#464646;border:1px solid #3d3d3d"></div>
<div class="t" style="left:1629px;top:685px;font-size:10px;color:#e8e8e8;">100%</div>
<div class="a" style="left:1662px;top:680px;width:11px;height:18px;background:#4a4a4a;border:1px solid #3d3d3d"></div>
<svg style="left:1664px;top:687px;" width="7" height="4" viewBox="0 0 7 4"><path d="M0.5 0.5L3.5 3.5L6.5 0.5" fill="none" stroke="#c0c0c0" stroke-width="1.1"/></svg>
<div class="a" style="left:1383px;top:703px;width:281px;height:1px;background:#474747;"></div>
<div class="a" style="left:1379px;top:704px;width:301px;height:280px;background:#4d4d4d;"></div>
<div class="a" style="left:1379px;top:706px;width:285px;height:25px;background:#535353;"></div>
<div class="a" style="left:1408px;top:706px;width:256px;height:25px;background:#5c5c5c;"></div>
<div class="a" style="left:1447px;top:706px;width:217px;height:25px;background:#6a6a6a;"></div>
<div class="a" style="left:1379px;top:731px;width:285px;height:1px;background:#454545;"></div>
<svg style="left:1387px;top:715px;" width="14" height="9" viewBox="0 0 14 9"><path d="M0.5 4.5C3 0.5 11 0.5 13.5 4.5C11 8.5 3 8.5 0.5 4.5Z" fill="#e6e6e6"/><circle cx="7" cy="4.5" r="2.2" fill="#535353"/></svg>
<div class="t" style="left:1454px;top:717px;font-size:10px;color:#ececec;letter-spacing:-0.6px">KRONE LOADCARRIER</div>
<div class="a" style="left:1379px;top:733px;width:285px;height:25px;background:#535353;"></div>
<div class="a" style="left:1379px;top:758px;width:285px;height:1px;background:#454545;"></div>
<svg style="left:1387px;top:742px;" width="14" height="9" viewBox="0 0 14 9"><path d="M0.5 4.5C3 0.5 11 0.5 13.5 4.5C11 8.5 3 8.5 0.5 4.5Z" fill="#e6e6e6"/><circle cx="7" cy="4.5" r="2.2" fill="#535353"/></svg>
<div class="t" style="left:1454px;top:744px;font-size:10px;color:#ececec;letter-spacing:-0.6px">KRONE DRYLINE</div>
<div class="a" style="left:1379px;top:759px;width:285px;height:25px;background:#535353;"></div>
<div class="a" style="left:1379px;top:784px;width:285px;height:1px;background:#454545;"></div>
<svg style="left:1387px;top:768px;" width="14" height="9" viewBox="0 0 14 9"><path d="M0.5 4.5C3 0.5 11 0.5 13.5 4.5C11 8.5 3 8.5 0.5 4.5Z" fill="#e6e6e6"/><circle cx="7" cy="4.5" r="2.2" fill="#535353"/></svg>
<div class="t" style="left:1454px;top:770px;font-size:10px;color:#ececec;letter-spacing:-0.6px">KRONE PROFILINER</div>
<div class="a" style="left:1379px;top:784px;width:285px;height:25px;background:#535353;"></div>
<div class="a" style="left:1379px;top:809px;width:285px;height:1px;background:#454545;"></div>
<svg style="left:1387px;top:793px;" width="14" height="9" viewBox="0 0 14 9"><path d="M0.5 4.5C3 0.5 11 0.5 13.5 4.5C11 8.5 3 8.5 0.5 4.5Z" fill="#e6e6e6"/><circle cx="7" cy="4.5" r="2.2" fill="#535353"/></svg>
<div class="t" style="left:1454px;top:795px;font-size:10px;color:#ececec;letter-spacing:-0.6px">KRONE COOL LINER</div>
<svg style="left:1411px;top:709px;" width="37" height="22" viewBox="0 0 37 22"><rect x="0.5" y="0.5" width="36" height="21" fill="none" stroke="#f2f2f2" stroke-width="1.3"/><rect x="13" y="0" width="10" height="2" fill="#5c5c5c"/><rect x="13" y="20" width="10" height="2" fill="#5c5c5c"/><rect x="2" y="2" width="33" height="18" fill="#1e1e1e"/><rect x="3" y="3" width="31" height="16" fill="#fff9db"/><rect x="13" y="4" width="20" height="6" fill="#8b7f6e"/><rect x="19" y="11.5" width="14" height="5.5" fill="#8b7f6e"/><rect x="14" y="11" width="3" height="5" fill="#8b7f6e"/><rect x="31" y="4" width="1.5" height="14" fill="#e8e4c8"/></svg>
<svg style="left:1414px;top:737px;outline:1px solid #3d3d3d" width="31" height="17" viewBox="0 0 31 17"><rect x="0" y="0" width="31" height="17" fill="#8b7f6e"/><rect x="0" y="8" width="31" height="2" fill="#fff9db"/><path d="M1 16L1 12L7 16Z" fill="#fff9db"/></svg>
<svg style="left:1414px;top:763px;outline:1px solid #3d3d3d" width="31" height="17" viewBox="0 0 31 17"><rect x="0" y="0" width="31" height="17" fill="#8b7f6e"/><rect x="4" y="9" width="27" height="2" fill="#fff9db"/><rect x="0" y="15" width="31" height="2" fill="#fff9db"/><rect x="3" y="1" width="1.5" height="15" fill="#fff9db"/></svg>
<svg style="left:1414px;top:788px;outline:1px solid #3d3d3d" width="31" height="17" viewBox="0 0 31 17"><rect x="0" y="0" width="31" height="17" fill="#8b7f6e"/><rect x="0" y="14" width="31" height="2" fill="#fff9db"/><rect x="3" y="1" width="1.5" height="14" fill="#fff9db"/><rect x="0" y="4" width="6" height="1" fill="#fff9db"/></svg>
<div class="a" style="left:1379px;top:984px;width:301px;height:1px;background:#3e3e3e;"></div>
<div class="a" style="left:1379px;top:985px;width:301px;height:19px;background:#535353;"></div>
<svg style="left:1477px;top:992px;" width="14" height="8" viewBox="0 0 14 8"><rect x="0.8" y="0.8" width="12.4" height="6.4" rx="3.2" fill="none" stroke="#8a8a8a" stroke-width="1.4"/><path d="M4 4H10" stroke="#8a8a8a" stroke-width="1.4"/></svg>
<div class="t" style="left:1505px;top:989px;font-size:13px;color:#d8d8d8;font-weight:bold;font-family:'Liberation Serif',serif"><i>fx</i></div>
<svg style="left:1530px;top:991px;" width="15" height="10" viewBox="0 0 15 10"><rect x="0" y="0" width="15" height="10" fill="#d8d8d8"/><circle cx="7.5" cy="5" r="3" fill="#535353"/></svg>
<svg style="left:1559px;top:990px;" width="12" height="12" viewBox="0 0 12 12"><circle cx="6" cy="6" r="5.5" fill="#d8d8d8"/><path d="M2 10L10 2A5.5 5.5 0 0 1 10 10Z" fill="#777"/></svg>
<svg style="left:1585px;top:991px;" width="14" height="10" viewBox="0 0 14 10"><path d="M0 1H5L6 2.5H14V10H0Z" fill="#d8d8d8"/></svg>
<svg style="left:1613px;top:990px;" width="13" height="12" viewBox="0 0 13 12"><rect x="0.7" y="0.7" width="11.6" height="10.6" fill="none" stroke="#d8d8d8" stroke-width="1.3"/><path d="M6.5 3V9M3.5 6H9.5" stroke="#d8d8d8" stroke-width="1.2"/></svg>
<svg style="left:1640px;top:990px;" width="11" height="13" viewBox="0 0 11 13"><path d="M0 2H11M4 2V0.5H7V2" stroke="#d8d8d8" stroke-width="1.2" fill="none"/><path d="M1.5 3.5H9.5V13H1.5Z" fill="none" stroke="#d8d8d8" stroke-width="1.3"/><path d="M4 5V11M7 5V11" stroke="#d8d8d8" stroke-width="1"/></svg>
</body></html>
